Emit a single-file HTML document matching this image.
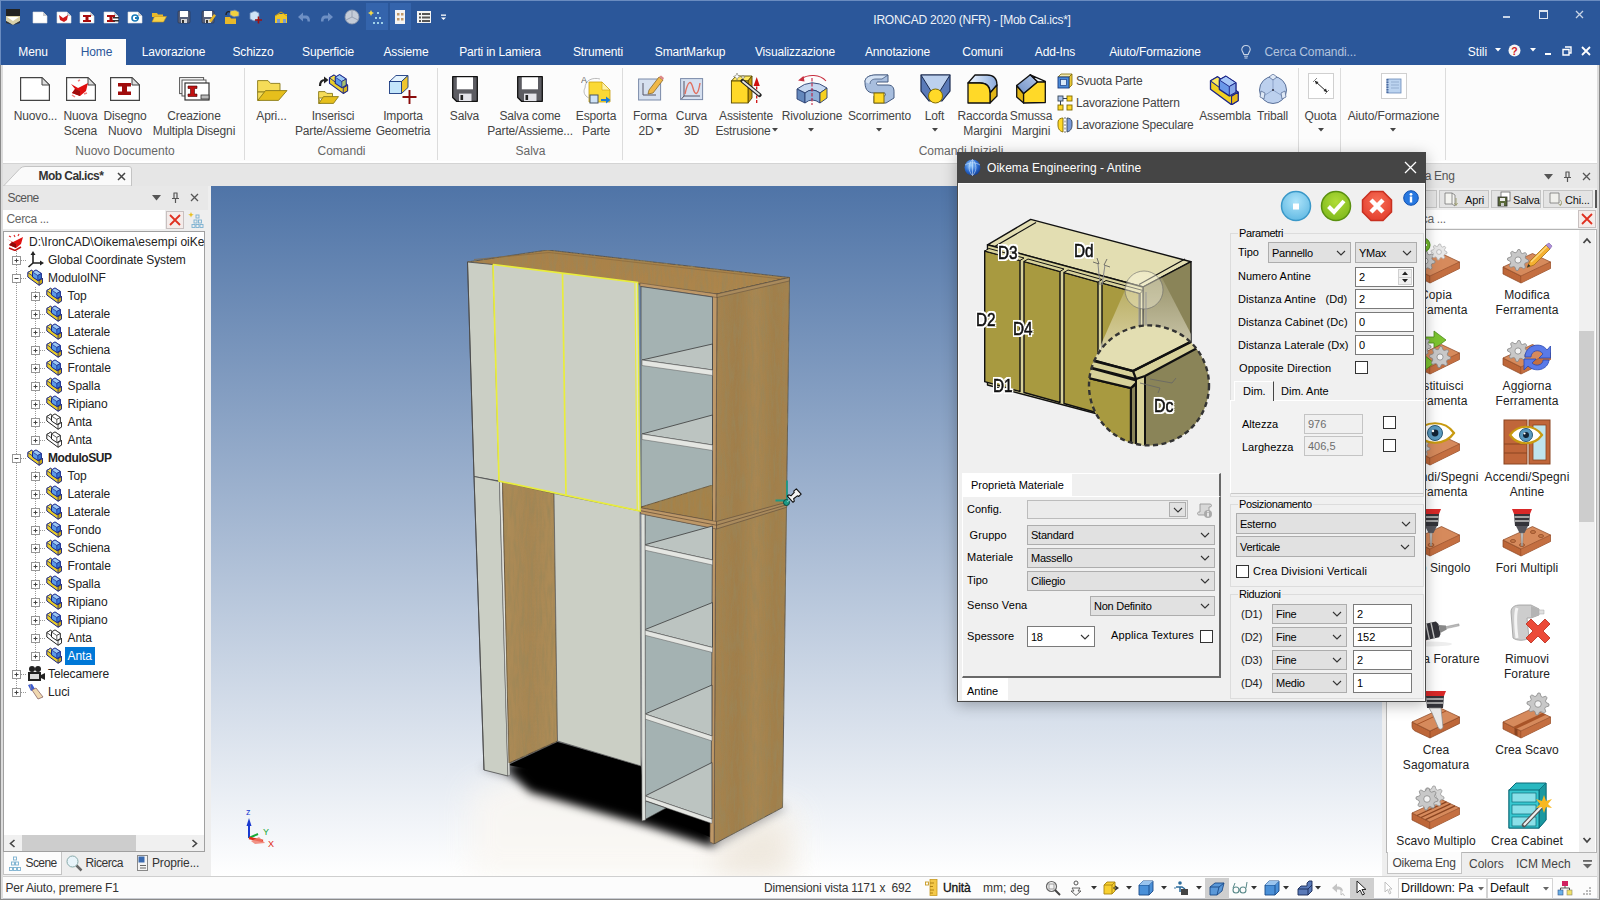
<!DOCTYPE html>
<html lang="it"><head><meta charset="utf-8"><title>IRONCAD 2020 (NFR) - [Mob Cal.ics*]</title>
<style>
html,body{margin:0;padding:0}
body{width:1600px;height:900px;overflow:hidden;position:relative;background:#f0f0f0;font-family:"Liberation Sans",sans-serif;font-size:12px;color:#222}
div,span.t,span.d,svg{position:absolute;box-sizing:border-box}
span.t{white-space:nowrap;line-height:16px;font-size:12px}
span.d{white-space:nowrap;line-height:14px;font-size:11px;color:#000}
span.c{transform:translateX(-50%)}
.w{color:#fff}
</style></head>
<body>
<div style="left:0px;top:0px;width:1600px;height:65px;background:#2b579a"></div><div style="left:0px;top:0px;width:1600px;height:1px;background:#6a8cc0"></div><div style="left:0px;top:0px;width:1px;height:65px;background:#6a8cc0"></div><svg style="left:5px;top:9px;" width="16" height="16" viewBox="0 0 16 16"><rect x="1" y="0" width="14" height="7" fill="#222"/><path d="M1 7 L15 7 L15 12 L8 16 L1 12Z" fill="#d8d0a8"/><path d="M2 8 L14 8 L8 12Z" fill="#fff"/><path d="M1 12 L8 16 L15 12 L15 14 L8 16 L1 14Z" fill="#333"/></svg><svg style="left:32px;top:9px;" width="16" height="16" viewBox="0 0 16 16"><path d="M1 3 L11 3 L15 7 L15 14 L1 14Z" fill="#fff" stroke="#ddd" stroke-width=".6"/><path d="M11 3 L11 7 L15 7Z" fill="#ccc"/></svg><svg style="left:56px;top:9px;" width="16" height="16" viewBox="0 0 16 16"><path d="M1 3 L11 3 L15 7 L15 14 L1 14Z" fill="#fff" stroke="#ddd" stroke-width=".6"/><path d="M11 3 L11 7 L15 7Z" fill="#ccc"/><path d="M3 6 L7 9 L12 6 L11 11 L8 13 L4 11Z" fill="#d01818"/></svg><svg style="left:79px;top:9px;" width="16" height="16" viewBox="0 0 16 16"><path d="M1 3 L11 3 L15 7 L15 14 L1 14Z" fill="#fff" stroke="#ddd" stroke-width=".6"/><path d="M11 3 L11 7 L15 7Z" fill="#ccc"/><path d="M4 6 H12 V8 H9.5 V11 H12 V13 H4 V11 H6.5 V8 H4Z" fill="#a80c0c"/></svg><svg style="left:103px;top:9px;" width="16" height="16" viewBox="0 0 16 16"><path d="M1 3 L11 3 L15 7 L15 14 L1 14Z" fill="#fff" stroke="#ddd" stroke-width=".6"/><path d="M11 3 L11 7 L15 7Z" fill="#ccc"/><path d="M4 6 H12 V8 H9.5 V11 H12 V13 H4 V11 H6.5 V8 H4Z" fill="#a80c0c"/><rect x="10" y="8" width="6" height="1.5" fill="#333"/><rect x="10" y="11" width="6" height="1.5" fill="#333"/></svg><svg style="left:127px;top:9px;" width="16" height="16" viewBox="0 0 16 16"><path d="M1 3 L11 3 L15 7 L15 14 L1 14Z" fill="#fff" stroke="#ddd" stroke-width=".6"/><path d="M11 3 L11 7 L15 7Z" fill="#ccc"/><circle cx="8" cy="9" r="3" fill="none" stroke="#1a7ab8" stroke-width="1.6"/><rect x="8" y="8" width="4" height="2" fill="#1a7ab8"/></svg><svg style="left:151px;top:9px;" width="16" height="16" viewBox="0 0 16 16"><path d="M1 4 H6 L7 5.5 H12 V8 H1Z" fill="#e8b82a"/><path d="M1 13 L3.5 7.5 H15.5 L12.5 13Z" fill="#f6d24a" stroke="#c8961a" stroke-width=".6"/></svg><svg style="left:176px;top:9px;" width="16" height="16" viewBox="0 0 16 16"><rect x="2" y="2" width="12" height="12" rx="1" fill="#56607a" stroke="#2a3048" stroke-width=".6"/><rect x="4" y="2" width="8" height="6" fill="#fff"/><rect x="5" y="10" width="6" height="4" fill="#d8d8d8"/><rect x="6" y="11" width="2" height="3" fill="#333"/></svg><svg style="left:200px;top:9px;" width="16" height="16" viewBox="0 0 16 16"><rect x="2" y="2" width="12" height="12" rx="1" fill="#56607a" stroke="#2a3048" stroke-width=".6"/><rect x="4" y="2" width="8" height="6" fill="#fff"/><rect x="5" y="10" width="6" height="4" fill="#d8d8d8"/><rect x="6" y="11" width="2" height="3" fill="#333"/><path d="M9 12 L14 5 L16 6.5 L11 13.5Z" fill="#e8b82a"/></svg><svg style="left:224px;top:9px;" width="16" height="16" viewBox="0 0 16 16"><path d="M1 8 H6 L7 9.5 H12 V15 H1Z" fill="#e8b82a"/><path d="M6 2 L11 1 L15 3 L15 7 L10 8 L6 6Z" fill="#f0d040" stroke="#5a7ab8" stroke-width=".8"/><path d="M2 6 C2 3 4 2 6 3" fill="none" stroke="#222" stroke-width="1.4"/></svg><svg style="left:247px;top:9px;" width="16" height="16" viewBox="0 0 16 16"><path d="M3 4 L8 2 L12 4 V10 L7 12 L3 10Z" fill="#cfe4f6" stroke="#6a8ab8" stroke-width=".8"/><path d="M8 11 H15 M11.5 7.5 V14.5" stroke="#a01010" stroke-width="1.6"/></svg><svg style="left:273px;top:9px;" width="16" height="16" viewBox="0 0 16 16"><path d="M2 7 L6 5 H14 V14 H2Z" fill="#f0c828"/><rect x="4" y="10" width="3" height="4" fill="#7a9ad0"/><rect x="10" y="10" width="3" height="4" fill="#7a9ad0"/><path d="M2 7 L8 3 L14 7" fill="none" stroke="#d0a010" stroke-width="1"/></svg><svg style="left:296px;top:9px;" width="16" height="16" viewBox="0 0 16 16"><path d="M2 8 L7 3.5 V6.5 H10 C13 6.5 14 9 14 12.5 H11.5 C11.5 10.5 11 9.5 9.5 9.5 H7 V12.5Z" fill="#6d8fc4"/></svg><svg style="left:319px;top:9px;" width="16" height="16" viewBox="0 0 16 16"><path d="M14 8 L9 3.5 V6.5 H6 C3 6.5 2 9 2 12.5 H4.500 C4.5 10.5 5 9.5 6.5 9.5 H9 V12.5Z" fill="#6d8fc4"/></svg><svg style="left:344px;top:9px;" width="16" height="16" viewBox="0 0 16 16"><circle cx="8" cy="8" r="7" fill="#c4ccd8" stroke="#8a96aa" stroke-width=".8"/><path d="M8 1 V8 L2 11 M8 8 L14 11" stroke="#98a2b4" stroke-width="1" fill="none"/></svg><div style="left:366px;top:3px;width:22px;height:27px;background:#3464ac"></div><div style="left:390px;top:3px;width:21px;height:27px;background:#3464ac"></div><svg style="left:368px;top:9px;" width="16" height="16" viewBox="0 0 16 16"><path d="M3 1 L4 3 L6 4 L4 5 L3 7 L2 5 L0 4 L2 3Z" fill="#f2d84a"/><g fill="#9fd0e8"><rect x="9" y="3" width="2" height="2"/><rect x="7" y="8" width="2" height="2"/><rect x="11" y="8" width="2" height="2"/><rect x="5" y="13" width="2" height="2"/><rect x="9" y="13" width="2" height="2"/><rect x="13" y="13" width="2" height="2"/></g></svg><svg style="left:392px;top:9px;" width="16" height="16" viewBox="0 0 16 16"><rect x="3" y="1" width="10" height="14" fill="#f4f4f4"/><rect x="5" y="4" width="2.5" height="2.5" fill="#c09868"/><rect x="9" y="4" width="2.5" height="2.5" fill="#c09868"/><rect x="5" y="9" width="2.5" height="2.5" fill="#c09868"/><rect x="9" y="9" width="2.5" height="2.5" fill="#c09868"/></svg><svg style="left:416px;top:9px;" width="16" height="16" viewBox="0 0 16 16"><rect x="1" y="2" width="14" height="12" fill="#f4f4f4"/><rect x="3" y="4" width="2" height="2" fill="#555"/><rect x="6" y="4" width="8" height="2" fill="#555"/><rect x="3" y="7.5" width="2" height="2" fill="#555"/><rect x="6" y="7.500" width="8" height="2" fill="#555"/><rect x="3" y="11" width="2" height="2" fill="#555"/><rect x="6" y="11" width="8" height="2" fill="#555"/></svg><svg style="left:435px;top:9px;" width="16" height="16" viewBox="0 0 16 16"><rect x="6" y="5.500" width="5" height="1.300" fill="#fff"/><path d="M6 8.500 H11 L8.500 11Z" fill="#fff"/></svg><span class="t c" style="left:972px;top:11.5px;color:#eef2f8;letter-spacing:-.25px">IRONCAD 2020 (NFR) - [Mob Cal.ics*]</span><div style="left:1503px;top:16px;width:7px;height:2px;background:#c8d4e6"></div><div style="left:1539px;top:10px;width:9px;height:9px;border:1px solid #dde5f0;border-top-width:2px"></div><svg style="left:1575px;top:10px;" width="9" height="9" viewBox="0 0 9 9"><path d="M1 1 L8 8 M8 1 L1 8" stroke="#c8d4e6" stroke-width="1.3"/></svg><div style="left:66px;top:39px;width:60px;height:27px;background:#fcfcfc"></div><span class="t c" style="left:33px;top:44px;color:#fff;letter-spacing:-.15px">Menu</span><span class="t c" style="left:96.5px;top:44px;color:#2b579a;letter-spacing:-.15px">Home</span><span class="t c" style="left:173.5px;top:44px;color:#fff;letter-spacing:-.15px">Lavorazione</span><span class="t c" style="left:253px;top:44px;color:#fff;letter-spacing:-.15px">Schizzo</span><span class="t c" style="left:328px;top:44px;color:#fff;letter-spacing:-.15px">Superficie</span><span class="t c" style="left:406px;top:44px;color:#fff;letter-spacing:-.15px">Assieme</span><span class="t c" style="left:500px;top:44px;color:#fff;letter-spacing:-.15px">Parti in Lamiera</span><span class="t c" style="left:598px;top:44px;color:#fff;letter-spacing:-.15px">Strumenti</span><span class="t c" style="left:690px;top:44px;color:#fff;letter-spacing:-.15px">SmartMarkup</span><span class="t c" style="left:795px;top:44px;color:#fff;letter-spacing:-.15px">Visualizzazione</span><span class="t c" style="left:897.5px;top:44px;color:#fff;letter-spacing:-.15px">Annotazione</span><span class="t c" style="left:982.5px;top:44px;color:#fff;letter-spacing:-.15px">Comuni</span><span class="t c" style="left:1055px;top:44px;color:#fff;letter-spacing:-.15px">Add-Ins</span><span class="t c" style="left:1155px;top:44px;color:#fff;letter-spacing:-.15px">Aiuto/Formazione</span><svg style="left:1240px;top:44px;" width="12" height="16" viewBox="0 0 12 16"><path d="M6 1.500 C3 1.500 1.800 3.600 1.800 5.500 C1.800 7.500 3.500 8.500 3.800 10.500 H8.200 C8.500 8.500 10.200 7.500 10.200 5.500 C10.200 3.600 9 1.500 6 1.500Z" fill="none" stroke="#c8d4e6" stroke-width="1.1"/><path d="M4 12.200 H8 M4.500 14 H7.500" stroke="#c8d4e6" stroke-width="1"/></svg><span class="t" style="left:1264.5px;top:44px;color:#b4c4de;letter-spacing:-.1px">Cerca Comandi...</span><span class="t c" style="left:1477.5px;top:44px;color:#fff">Stili</span><svg style="left:1495px;top:48px;" width="6" height="4" viewBox="0 0 6 4"><path d="M0 0 H6 L3 3.500Z" fill="#fff"/></svg><svg style="left:1508px;top:44px;" width="13" height="13" viewBox="0 0 13 13"><circle cx="6.500" cy="6.500" r="6" fill="#f6f6f6"/><text x="6.500" y="10.500" font-size="10.500" font-weight="bold" fill="#d02020" text-anchor="middle" font-family="Liberation Sans,sans-serif">?</text></svg><svg style="left:1530px;top:48px;" width="6" height="4" viewBox="0 0 6 4"><path d="M0 0 H6 L3 3.500Z" fill="#fff"/></svg><div style="left:1545px;top:53px;width:6px;height:2px;background:#fff"></div><svg style="left:1562px;top:46px;" width="10" height="10" viewBox="0 0 10 10"><path d="M3 1 H9 V7 H7 M1 3.500 H7 V9 H1Z" fill="none" stroke="#fff" stroke-width="1.400"/></svg><svg style="left:1581px;top:46px;" width="10" height="10" viewBox="0 0 10 10"><path d="M1 1 L9 9 M9 1 L1 9" stroke="#fff" stroke-width="1.800"/></svg>
<div style="left:0px;top:65px;width:1600px;height:99px;background:#fcfcfc"></div><div style="left:0px;top:65px;width:3px;height:99px;background:#e4e7ec"></div><div style="left:1597px;top:65px;width:3px;height:99px;background:#e4e7ec"></div><div style="left:0px;top:161px;width:1600px;height:2px;background:#ffffff"></div><div style="left:0px;top:163px;width:1600px;height:1px;background:#d4d4d4"></div><svg style="left:20px;top:77px;" width="30" height="24" viewBox="0 0 30 24"><path d="M.6 .6 H22 L29.400 8 V23.400 H.6Z" fill="#fff" stroke="#444" stroke-width="1.200"/><path d="M22 .6 V8 H29.400Z" fill="#ddd" stroke="#444" stroke-width="1"/></svg><svg style="left:66px;top:77px;" width="30" height="24" viewBox="0 0 30 24"><path d="M.6 .6 H22 L29.400 8 V23.400 H.6Z" fill="#fff" stroke="#444" stroke-width="1.200"/><path d="M22 .6 V8 H29.400Z" fill="#ddd" stroke="#444" stroke-width="1"/><path d="M5 7 L12 11 L22 6 L20 14 L14 19 L6 16 L9 12Z" fill="#e01010"/><path d="M9 12 L14 14 L14 19 L6 16Z" fill="#a00c0c"/><path d="M12 4 l2 -1 M6 18 l3 2 M18 17 l3 -1" stroke="#f08080" stroke-width="1.500"/></svg><svg style="left:110px;top:77px;" width="30" height="24" viewBox="0 0 30 24"><path d="M.6 .6 H22 L29.400 8 V23.400 H.6Z" fill="#fff" stroke="#444" stroke-width="1.200"/><path d="M22 .6 V8 H29.400Z" fill="#ddd" stroke="#444" stroke-width="1"/><path d="M8 6 H21 V9.500 H17 V14.500 H21 V18 H8 V14.500 H12 V9.500 H8Z" fill="#a00c0c"/></svg><svg style="left:179px;top:77px;" width="31" height="24" viewBox="0 0 31 24"><rect x=".6" y=".6" width="24" height="16" fill="#fff" stroke="#555" stroke-width="1"/><rect x="3" y="3" width="24" height="16" fill="#fff" stroke="#555" stroke-width="1"/><rect x="6" y="6" width="24" height="17" fill="#fff" stroke="#333" stroke-width="1.200"/><path d="M9 9 H18 V11.500 H15.500 V17 H18 V19.500 H9 V17 H11.500 V11.500 H9Z" fill="#c01010" stroke="#400" stroke-width=".6"/><rect x="22" y="18" width="8" height="4" fill="#bbb" stroke="#333" stroke-width=".8"/></svg><span class="t c" style="left:35.5px;top:108px;color:#444;letter-spacing:-.15px">Nuovo...</span><span class="t c" style="left:80.5px;top:108px;color:#444;letter-spacing:-.15px">Nuova</span><span class="t c" style="left:80.5px;top:123px;color:#444;letter-spacing:-.15px">Scena</span><span class="t c" style="left:125px;top:108px;color:#444;letter-spacing:-.15px">Disegno</span><span class="t c" style="left:125px;top:123px;color:#444;letter-spacing:-.15px">Nuovo</span><span class="t c" style="left:194px;top:108px;color:#444;letter-spacing:-.15px">Creazione</span><span class="t c" style="left:194px;top:123px;color:#444;letter-spacing:-.15px">Multipla Disegni</span><span class="t c" style="left:125px;top:143px;color:#666">Nuovo Documento</span><div style="left:244px;top:68px;width:1px;height:92px;background:#dcdcdc"></div><svg style="left:257px;top:79.5px;" width="31" height="21" viewBox="0 0 31 21"><path d="M.6 .6 H11 L13.500 3.400 H23 V12 H.6Z" fill="#f6dc58" stroke="#8a7a1a" stroke-width=".9" stroke-linejoin="round"/><path d="M.6 12 V20.400 H3 L9 12Z" fill="#f6dc58" stroke="#8a7a1a" stroke-width=".9"/><path d="M.8 20.400 L8.500 10.600 H30 L21.500 20.400Z" fill="#e6bf1c" stroke="#8a7a1a" stroke-width=".9" stroke-linejoin="round"/></svg><svg style="left:317px;top:73px;" width="33" height="32" viewBox="0 0 33 32"><path d="M1.600 18.600 H8 L9.800 20.400 H15.500 V25 H1.600Z" fill="#f6dc58" stroke="#8a7a1a" stroke-width=".9" stroke-linejoin="round"/><path d="M1.600 25 V30.400 H4Z" fill="#f6dc58" stroke="#8a7a1a" stroke-width=".8"/><path d="M1.800 30.400 L6.500 23.600 H21.500 L16.500 30.400Z" fill="#e6bf1c" stroke="#8a7a1a" stroke-width=".9" stroke-linejoin="round"/><path d="M3 13 C3 8.500 5 7 8 7" fill="none" stroke="#222" stroke-width="2.200"/><path d="M7 3.500 L11.500 7 L7 10.500Z" fill="#222"/><g transform="translate(11.500,.5) scale(1.230)"><path d="M.8 3.500 L4.500 1.300 L15.500 9.500 V14 L12 16.200 L.8 8Z" fill="#e8cc28" stroke="#1a2488" stroke-width=".9" stroke-linejoin="round"/><path d="M.8 3.500 L4.500 1.300 L15.500 9.500 L12 11.700Z" fill="#f4e04a" stroke="#1a2488" stroke-width=".7" stroke-linejoin="round"/><path d="M12 11.700 V16.200 L15.500 14 V9.500Z" fill="#d8b41c" stroke="#1a2488" stroke-width=".7" stroke-linejoin="round"/><path d="M5.500 3 L9 1 L14.300 4.500 V9.500 L10.800 11.500 L5.500 8Z" fill="#5a9ae8" stroke="#1a2488" stroke-width=".9" stroke-linejoin="round"/><path d="M5.500 3 L9 1 L14.300 4.500 L10.800 6.500Z" fill="#9cc8f4" stroke="#1a2488" stroke-width=".6" stroke-linejoin="round"/><path d="M10.800 6.500 V11.500 L14.300 9.500 V4.500Z" fill="#a8c070" stroke="#1a2488" stroke-width=".6" stroke-linejoin="round"/></g></svg><svg style="left:388px;top:74px;" width="30" height="31" viewBox="0 0 30 31"><path d="M1.500 7.500 L8 1.500 H20 L13.500 7.500Z" fill="#e6f4fd" stroke="#1a3a80" stroke-width=".9" stroke-linejoin="round"/><path d="M13.500 7.500 L20 1.500 V13.500 L13.500 19.500Z" fill="#efc62e" stroke="#1a3a80" stroke-width=".9" stroke-linejoin="round"/><rect x="1.500" y="7.500" width="12" height="12" fill="#c4e6fb" stroke="#1a3a80" stroke-width=".9"/><path d="M14.500 23 H28.500 M21.500 16 V30" stroke="#8a0c0c" stroke-width="1.900"/></svg><span class="t c" style="left:271.5px;top:108px;color:#444;letter-spacing:-.15px">Apri...</span><span class="t c" style="left:333px;top:108px;color:#444;letter-spacing:-.15px">Inserisci</span><span class="t c" style="left:333px;top:123px;color:#444;letter-spacing:-.15px">Parte/Assieme</span><span class="t c" style="left:403px;top:108px;color:#444;letter-spacing:-.15px">Importa</span><span class="t c" style="left:403px;top:123px;color:#444;letter-spacing:-.15px">Geometria</span><span class="t c" style="left:341.5px;top:143px;color:#666">Comandi</span><div style="left:437px;top:68px;width:1px;height:92px;background:#dcdcdc"></div><svg style="left:452px;top:76px;" width="26" height="26" viewBox="0 0 26 26"><path d="M.7 .7 H25.300 V25.300 H4.500 L.7 21.500Z" fill="#5c5c62" stroke="#111" stroke-width="1.300" stroke-linejoin="round"/><rect x="4.800" y="1.300" width="16.200" height="12" fill="#fff"/><rect x="7" y="17.600" width="12.500" height="7.500" fill="#e4e4ea"/><rect x="8.500" y="19" width="2.600" height="5" fill="#222"/></svg><svg style="left:517px;top:76px;" width="26" height="26" viewBox="0 0 26 26"><path d="M.7 .7 H25.300 V25.300 H4.500 L.7 21.500Z" fill="#5c5c62" stroke="#111" stroke-width="1.300" stroke-linejoin="round"/><rect x="4.800" y="1.300" width="16.200" height="12" fill="#fff"/><rect x="7" y="17.600" width="12.500" height="7.500" fill="#e4e4ea"/><rect x="8.500" y="19" width="2.600" height="5" fill="#222"/></svg><svg style="left:581px;top:74px;" width="31" height="30" viewBox="0 0 31 30"><path d="M8 8 H21 L29 16 V28 H8Z" fill="#fbd935" stroke="#c8a010" stroke-width=".8"/><path d="M21 8 V16 H29Z" fill="#fff3a8" stroke="#c8a010" stroke-width=".6"/><rect x="9" y="21" width="8" height="8" fill="#cfe2f6" stroke="#456" stroke-width="1"/><path d="M20 25 H25 V22.500 L29.500 26 L25 29.500 V27 H20Z" fill="#1a7ad8"/><path d="M4 14 C4 6 12 3 19 5 M8 24 C3 22 2 17 4 14" fill="none" stroke="#aaa" stroke-width=".8"/><text x="0" y="9" font-size="9" fill="#666" font-family="Liberation Sans,sans-serif">A</text></svg><span class="t c" style="left:464.5px;top:108px;color:#444;letter-spacing:-.15px">Salva</span><span class="t c" style="left:530px;top:108px;color:#444;letter-spacing:-.15px">Salva come</span><span class="t c" style="left:530px;top:123px;color:#444;letter-spacing:-.15px">Parte/Assieme...</span><span class="t c" style="left:596px;top:108px;color:#444;letter-spacing:-.15px">Esporta</span><span class="t c" style="left:596px;top:123px;color:#444;letter-spacing:-.15px">Parte</span><span class="t c" style="left:530.5px;top:143px;color:#666">Salva</span><div style="left:622px;top:68px;width:1px;height:92px;background:#dcdcdc"></div><svg style="left:638px;top:74px;" width="26" height="28" viewBox="0 0 26 28"><rect x=".6" y="5" width="22" height="21" fill="#d6e0f0" stroke="#7a8aa8" stroke-width="1"/><path d="M5 9 V21 H18" fill="none" stroke="#556" stroke-width="1"/><path d="M11 16 L21 3 L25 6 L15 19 L10 20Z" fill="#f0b848" stroke="#8a6a2a" stroke-width=".8"/><path d="M21 3 L25 6 L26 4 L23 1.500Z" fill="#d88"/></svg><svg style="left:680px;top:78px;" width="24" height="23" viewBox="0 0 24 23"><rect x=".6" y=".6" width="22" height="21" fill="#d6e0f0" stroke="#7a8aa8" stroke-width="1"/><path d="M4 3 V18 H20 M4 18 L1.500 21" fill="none" stroke="#556" stroke-width="1"/><path d="M5 16 C8 2 11 2 13 10 C15 18 18 18 20 5" fill="none" stroke="#e07060" stroke-width="1.400"/></svg><svg style="left:730px;top:73px;" width="32" height="31" viewBox="0 0 32 31"><path d="M1.400 8 L6 3 H22 L18 8Z" fill="#ffe860" stroke="#5a4a00" stroke-width=".9" stroke-linejoin="round"/><path d="M18 8 L22 3 V25 L18 30Z" fill="#c89a10" stroke="#5a4a00" stroke-width=".9" stroke-linejoin="round"/><rect x="1.400" y="8" width="16.600" height="22" fill="#ffd928" stroke="#5a4a00" stroke-width=".9"/><path d="M26.700 30 V12" stroke="#d01010" stroke-width="1.300" stroke-dasharray="3 1.500"/><path d="M23.600 13 L26.700 4 L29.800 13Z" fill="#d01010"/><path d="M12.500 8 L29.500 22" stroke="#222" stroke-width="4.200" stroke-linecap="round"/><path d="M13 8.500 L29 21.500" stroke="#e4e4e4" stroke-width="1.800" stroke-linecap="round"/><path d="M7 0 l1 2.500 l2.500 1 l-2.500 1 l-1 2.500 l-1 -2.500 l-2.500 -1 l2.500 -1Z M13 2 l.6 1.500 l1.500 .6 l-1.500 .6 l-.6 1.500 l-.6 -1.500 l-1.500 -.6 l1.500 -.6Z" fill="#fff" stroke="#665" stroke-width=".5"/></svg><span class="t c" style="left:650px;top:108px;color:#444;letter-spacing:-.15px">Forma</span><span class="t c" style="left:646px;top:123px;color:#444;letter-spacing:-.15px">2D</span><svg style="left:655.5px;top:127.5px;" width="6" height="4" viewBox="0 0 6 4"><path d="M0 0 H6 L3 3.500Z" fill="#444"/></svg><span class="t c" style="left:691.5px;top:108px;color:#444;letter-spacing:-.15px">Curva</span><span class="t c" style="left:691.5px;top:123px;color:#444;letter-spacing:-.15px">3D</span><span class="t c" style="left:746px;top:108px;color:#444;letter-spacing:-.15px">Assistente</span><span class="t c" style="left:743px;top:123px;color:#444;letter-spacing:-.15px">Estrusione</span><svg style="left:771.5px;top:127.5px;" width="6" height="4" viewBox="0 0 6 4"><path d="M0 0 H6 L3 3.500Z" fill="#444"/></svg><svg style="left:786px;top:72px;" width="43" height="33" viewBox="0 0 43 33"><path d="M11 17 Q26 5 41 16 L34 21 Q26 15 19 21Z" fill="#c6d8f0" stroke="#2a4070" stroke-width=".9" stroke-linejoin="round"/><path d="M11 17 L19 21 V31 L11 27Z" fill="#6488bc" stroke="#2a4070" stroke-width=".9" stroke-linejoin="round"/><path d="M19 21 Q26 15 34 21 V31 Q26 25 19 31Z" fill="#8eaed8" stroke="#2a4070" stroke-width=".9" stroke-linejoin="round"/><path d="M34 21 L41 16 V26 L34 31Z" fill="#f6d020" stroke="#2a4070" stroke-width=".9" stroke-linejoin="round"/><path d="M26 6 V33" stroke="#c01030" stroke-width="1" stroke-dasharray="3.500 1.500"/><path d="M40 9 C34 2 22 2 15 7" fill="none" stroke="#c83040" stroke-width="1.100"/><path d="M12 8.500 L17.500 4 L18.500 9.500Z" fill="#c83040"/></svg><span class="t c" style="left:812px;top:108px;color:#444;letter-spacing:-.15px">Rivoluzione</span><svg style="left:808px;top:127.5px;" width="6" height="4" viewBox="0 0 6 4"><path d="M0 0 H6 L3 3.500Z" fill="#444"/></svg><svg style="left:864px;top:74px;" width="31" height="30" viewBox="0 0 31 30"><path d="M1 8 C1 3 6 1 12 1 H24 V8 H14 C12 8 12 11 14 11 H24 C30 11 30 16 30 18 V24 L22 29 H10 V22 H20 C22 22 22 19 20 19 H10 C2 19 1 13 1 8Z" fill="#a8bede" stroke="#445a80" stroke-width="1"/><path d="M1 8 C1 3 6 1 12 1 H24 L18 5 H12 C8 5 6 7 6 10" fill="#d4e2f4" stroke="#445a80" stroke-width=".8"/><rect x="10" y="19" width="10" height="10" fill="#ffd928" stroke="#806a00" stroke-width="1"/></svg><span class="t c" style="left:879.5px;top:108px;color:#444;letter-spacing:-.15px">Scorrimento</span><svg style="left:876px;top:127.5px;" width="6" height="4" viewBox="0 0 6 4"><path d="M0 0 H6 L3 3.500Z" fill="#444"/></svg><svg style="left:920px;top:74px;" width="31" height="30" viewBox="0 0 31 30"><path d="M1 1 H30 V17 L22 27 H9 L1 17Z" fill="#5a7ab8" stroke="#1a2a50" stroke-width="1.200"/><path d="M1 1 H30 L20 17 H11Z" fill="#bcd0ee" stroke="#1a2a50" stroke-width="1"/><circle cx="15.500" cy="22" r="7" fill="#ffd928" stroke="#806a00" stroke-width="1"/></svg><span class="t c" style="left:934.5px;top:108px;color:#444;letter-spacing:-.15px">Loft</span><svg style="left:931.5px;top:127.5px;" width="6" height="4" viewBox="0 0 6 4"><path d="M0 0 H6 L3 3.500Z" fill="#444"/></svg><svg style="left:967px;top:74px;" width="31" height="30" viewBox="0 0 31 30"><defs><linearGradient id="rb" x1="0" x2="1" y1="0" y2="0"><stop offset="0" stop-color="#f4f8fd"/><stop offset=".6" stop-color="#b4cbec"/><stop offset="1" stop-color="#8aa8d8"/></linearGradient></defs><path d="M1 9 L8 1 H20 Q30 1 30 11 L23 19 Q23 9 13 9Z" fill="url(#rb)" stroke="#111" stroke-width="1.300" stroke-linejoin="round"/><path d="M23 19 L30 11 V22 L23 29Z" fill="#e2b616" stroke="#111" stroke-width="1.300" stroke-linejoin="round"/><path d="M1 9 H13 Q23 9 23 19 V29 H1Z" fill="#ffd928" stroke="#111" stroke-width="1.300" stroke-linejoin="round"/></svg><span class="t c" style="left:982.5px;top:108px;color:#444;letter-spacing:-.15px">Raccorda</span><span class="t c" style="left:982.5px;top:123px;color:#444;letter-spacing:-.15px">Margini</span><svg style="left:1016px;top:74px;" width="31" height="30" viewBox="0 0 31 30"><defs><linearGradient id="sb" x1="0" x2="1" y1="1" y2="0"><stop offset="0" stop-color="#6f90c6"/><stop offset="1" stop-color="#b4c8e8"/></linearGradient></defs><path d="M.7 11.500 L7.600 19.500 V29 L.7 22.900Z" fill="#e2b616" stroke="#111" stroke-width="1.300" stroke-linejoin="round"/><path d="M7.600 19.500 L21.600 7.800 H29.300 V28.500 L7.600 29Z" fill="#ffd928" stroke="#111" stroke-width="1.300" stroke-linejoin="round"/><path d="M.7 11.500 L14.300 .8 L21.600 7.800 L7.600 19.500Z" fill="url(#sb)" stroke="#111" stroke-width="1.300" stroke-linejoin="round"/><path d="M14.300 .8 L29.300 7.300 V7.800 H21.600Z" fill="#f6f9fd" stroke="#111" stroke-width="1.300" stroke-linejoin="round"/></svg><span class="t c" style="left:1031px;top:108px;color:#444;letter-spacing:-.15px">Smussa</span><span class="t c" style="left:1031px;top:123px;color:#444;letter-spacing:-.15px">Margini</span><svg style="left:1057px;top:73px;" width="16" height="16" viewBox="0 0 16 16"><path d="M1 4 L4 1 H15 L12 4Z" fill="#f0e8b0" stroke="#806a00" stroke-width=".8" stroke-linejoin="round"/><path d="M12 4 L15 1 V12 L12 15Z" fill="#e8c838" stroke="#806a00" stroke-width=".8" stroke-linejoin="round"/><rect x="1" y="4" width="11" height="11" fill="#4a8ad8" stroke="#1a3a80" stroke-width=".9"/><rect x="3.500" y="6.500" width="6" height="6" fill="#d8e8f8" stroke="#1a3a80" stroke-width=".7"/></svg><svg style="left:1057px;top:95px;" width="16" height="16" viewBox="0 0 16 16"><rect x="1" y="1" width="5" height="5" fill="#a8c0e8" stroke="#345" stroke-width=".9"/><rect x="10" y="1" width="5" height="5" fill="#ffd928" stroke="#806a00" stroke-width=".9"/><rect x="1" y="10" width="5" height="5" fill="#ffd928" stroke="#806a00" stroke-width=".9"/><rect x="10" y="10" width="5" height="5" fill="#ffd928" stroke="#806a00" stroke-width=".9"/><path d="M6 3.500 H10 M3.500 6 V10" stroke="#345" stroke-width="1"/></svg><svg style="left:1057px;top:117px;" width="16" height="16" viewBox="0 0 16 16"><path d="M1 5 C1 2 4 1 6 1 V15 C2 14 1 11 1 8Z" fill="#ffd928" stroke="#806a00" stroke-width=".9"/><path d="M15 5 C15 2 12 1 10 1 V15 C14 14 15 11 15 8Z" fill="#7a9ad8" stroke="#345" stroke-width=".9"/><path d="M8 0 V16" stroke="#555" stroke-width=".8" stroke-dasharray="2 1.500"/></svg><span class="t" style="left:1076px;top:73px;color:#444;letter-spacing:-.25px">Svuota Parte</span><span class="t" style="left:1076px;top:95px;color:#444;letter-spacing:-.2px">Lavorazione Pattern</span><span class="t" style="left:1076px;top:117px;color:#444;letter-spacing:-.25px">Lavorazione Speculare</span><svg style="left:1209px;top:74px;" width="31" height="31" viewBox="0 0 31 31"><g transform="translate(0,.3) scale(1.880)"><path d="M.8 3.500 L4.500 1.300 L15.500 9.500 V14 L12 16.200 L.8 8Z" fill="#f0d020" stroke="#1a2488" stroke-width=".7" stroke-linejoin="round"/><path d="M.8 3.500 L4.500 1.300 L15.500 9.500 L12 11.700Z" fill="#fae860" stroke="#1a2488" stroke-width=".55" stroke-linejoin="round"/><path d="M12 11.700 V16.200 L15.500 14 V9.500Z" fill="#e8b818" stroke="#1a2488" stroke-width=".55" stroke-linejoin="round"/><path d="M5.500 3 L9 1 L14.300 4.500 V9.500 L10.800 11.500 L5.500 8Z" fill="#6a98e8" stroke="#1a2488" stroke-width=".7" stroke-linejoin="round"/><path d="M5.500 3 L9 1 L14.300 4.500 L10.800 6.500Z" fill="#a8c8f8" stroke="#1a2488" stroke-width=".5" stroke-linejoin="round"/><path d="M10.800 6.500 V11.500 L14.300 9.500 V4.500Z" fill="#88a8e8" stroke="#1a2488" stroke-width=".5" stroke-linejoin="round"/></g></svg><span class="t c" style="left:1225px;top:108px;color:#444;letter-spacing:-.15px">Assembla</span><svg style="left:1258px;top:74px;" width="30" height="30" viewBox="0 0 30 30"><circle cx="15" cy="16" r="13.500" fill="#bcd0ee" stroke="#5a7098" stroke-width="1"/><path d="M15 2 V16 L4 23 M15 16 L26 23" stroke="#8098c0" stroke-width=".8" fill="none"/><path d="M11 3 L15 0 L19 3 L15 6Z M3 17 L7 19 L6 25 L2 23Z M27 17 L23 19 L24 25 L28 23Z" fill="#dfe9f6" stroke="#5a7098" stroke-width=".8"/><circle cx="15" cy="16" r="1" fill="#334"/></svg><span class="t c" style="left:1272.5px;top:108px;color:#444;letter-spacing:-.15px">Triball</span><span class="t c" style="left:961px;top:143px;color:#666">Comandi Iniziali</span><div style="left:1298px;top:68px;width:1px;height:92px;background:#dcdcdc"></div><svg style="left:1308px;top:73px;" width="26" height="26" viewBox="0 0 26 26"><rect x=".5" y=".5" width="25" height="25" fill="#fff" stroke="#d0d0d0"/><path d="M7 8 L19 19" stroke="#222" stroke-width="1"/><path d="M5 9 L9 5 M17 21 L21 17" stroke="#666" stroke-width=".8"/><path d="M7 8 L10.500 9 L8 11.500Z M19 19 L15.500 18 L18 15.500Z" fill="#222"/></svg><span class="t c" style="left:1320.5px;top:108px;color:#444;letter-spacing:-.15px">Quota</span><svg style="left:1317.5px;top:127.5px;" width="6" height="4" viewBox="0 0 6 4"><path d="M0 0 H6 L3 3.500Z" fill="#444"/></svg><div style="left:1340px;top:68px;width:1px;height:92px;background:#dcdcdc"></div><svg style="left:1381px;top:73px;" width="26" height="26" viewBox="0 0 26 26"><rect x=".5" y=".5" width="25" height="25" fill="#fff" stroke="#d0d0d0"/><rect x="6" y="6" width="14" height="14" fill="#bcd4f0" stroke="#6a8ab8" stroke-width=".8"/><path d="M6.500 6 V20" stroke="#4a6aa0" stroke-width="2" stroke-dasharray="1.500 1"/><path d="M10 9 H18 M10 12 H18 M10 15 H18" stroke="#8aa4c8" stroke-width=".8"/></svg><span class="t c" style="left:1393.5px;top:108px;color:#444;letter-spacing:-.15px">Aiuto/Formazione</span><svg style="left:1390px;top:127.5px;" width="6" height="4" viewBox="0 0 6 4"><path d="M0 0 H6 L3 3.500Z" fill="#444"/></svg><div style="left:1445px;top:68px;width:1px;height:92px;background:#dcdcdc"></div>
<div style="left:0px;top:164px;width:1386px;height:22px;background:#e6e6e6"></div><svg style="left:3px;top:166px;" width="130" height="20" viewBox="0 0 130 20"><path d="M.5 20 L17 2.500 Q19 .5 22 .5 H126 Q128.500 .5 128.500 3 V20Z" fill="#fafafa" stroke="#c4c4c4"/></svg><span class="t" style="left:38.5px;top:168px;font-weight:bold;color:#333;letter-spacing:-.55px">Mob Cal.ics*</span><svg style="left:117px;top:172px;" width="9" height="9" viewBox="0 0 9 9"><path d="M1 1 L8 8 M8 1 L1 8" stroke="#444" stroke-width="1.500"/></svg>
<div style="left:211px;top:186px;width:1171px;height:691px;background:linear-gradient(#4f74a7,#ffffff)"></div><svg style="left:211px;top:186px;" width="1171" height="691" viewBox="0 0 1171 691"><defs><linearGradient id="wood" x1="0" x2="1" y1="0" y2="0"><stop offset="0" stop-color="#a68450"/><stop offset=".3" stop-color="#a07e4b"/><stop offset=".55" stop-color="#a98752"/><stop offset=".8" stop-color="#a17f4b"/><stop offset="1" stop-color="#a5824e"/></linearGradient><linearGradient id="woodt" x1="0" x2="1" y1="0" y2="1"><stop offset="0" stop-color="#a88048"/><stop offset="1" stop-color="#ad864d"/></linearGradient><filter id="bl" x="-20%" y="-20%" width="140%" height="140%"><feGaussianBlur stdDeviation="5"/></filter><filter id="bl2" x="-30%" y="-30%" width="160%" height="160%"><feGaussianBlur stdDeviation="14"/></filter><filter id="wn" x="0" y="0" width="100%" height="100%"><feTurbulence type="fractalNoise" baseFrequency="0.35 0.045" numOctaves="3" seed="7" result="n"/><feColorMatrix in="n" type="matrix" values="0 0 0 0 .32  0 0 0 0 .24  0 0 0 0 .1  1.6 0 0 0 -.62" result="c"/><feComposite in="c" in2="SourceAlpha" operator="in" result="d"/><feMerge><feMergeNode in="SourceGraphic"/><feMergeNode in="d"/></feMerge></filter><pattern id="grain" width="7" height="60" patternUnits="userSpaceOnUse"><path d="M2 0 V60 M5 10 V45" stroke="#7a6236" stroke-width=".7" opacity=".3"/><path d="M3.500 0 V30" stroke="#b89c68" stroke-width=".6" opacity=".35"/></pattern><linearGradient id="wood2" x1="0" x2="1" y1="0" y2="0"><stop offset="0" stop-color="#ad8c58"/><stop offset=".5" stop-color="#a78652"/><stop offset="1" stop-color="#ae8d59"/></linearGradient></defs><polygon points="259,604 349,574 589,624 589,691 259,691" fill="#faf7f2" opacity=".8" filter="url(#bl2)"/><polygon points="505,664 573,626 579,691 505,691" fill="#e6dccc" opacity=".55" filter="url(#bl2)"/><polygon points="269,582 503,662 576,622 346,550" fill="#4a4a50" opacity=".42" filter="url(#bl)"/><polygon points="295,582 346,556 431,580 489,604 502,632 502,660 439,640 389,626 319,606" fill="#000" filter="url(#bl)"/><polygon points="297,579 346.5,556 430,580 431,635 455,622 501,635 501,652 429,620 349,589" fill="#000" /><polygon points="336.5,64 578.5,91.5 506,108 256.5,76" fill="url(#woodt)" stroke="#4a4a4a" stroke-width="0.8" filter="url(#wn)"/><polyline points="263,73.5 338,66.5 575,93.5" fill="none" stroke="#8a6a3e" stroke-width="0.7" /><polygon points="506,108 578.5,91.5 571.5,621.5 503,658" fill="url(#wood)" stroke="#4a4a4a" stroke-width="0.8" filter="url(#wn)"/><polygon points="501.5,108 506,108 503,658 499,656" fill="#be9868" stroke="#5a4a3a" stroke-width="0.6" /><polygon points="429,97 506,108 506,111.5 429,100.5" fill="#be9868" stroke="#5a4a3a" stroke-width="0.5" /><polygon points="506,108 578.5,91.5 578.3,95 506,111.5" fill="#a98a5c" stroke="#5a4a3a" stroke-width="0.5" /><polygon points="430,100.5 501.5,111 501.5,334 430,321" fill="#a4b2b2" stroke="#4a4a4a" stroke-width="0.8" /><polygon points="430,327.5 501.5,342 500,636 434,614 434,328" fill="#a4b2b2" stroke="#4a4a4a" stroke-width="0.8" /><polygon points="431,174 501.5,158 501.5,184" fill="#bcc4c1" stroke="#3a3a3a" stroke-width="0.8" /><polygon points="431,174 501.5,184 501.5,189.5 431,179.5" fill="#e4e6e2" stroke="#5a5a5a" stroke-width="0.5" /><polygon points="431,248 501.5,229 501.5,259" fill="#bcc4c1" stroke="#3a3a3a" stroke-width="0.8" /><polygon points="431,248 501.5,259 501.5,264.5 431,253.5" fill="#e4e6e2" stroke="#5a5a5a" stroke-width="0.5" /><polygon points="430,321 501.5,299 501.5,335 430,322" fill="#a6824a" stroke="#4a3a2a" stroke-width="0.7" filter="url(#wn)"/><polygon points="429.5,321.7 505.5,335.5 505.5,343 429.5,327.8" fill="#be9868" stroke="#5a4a3a" stroke-width="0.6" /><polyline points="429.5,324.7 505.5,339.2" fill="none" stroke="#6a5238" stroke-width="0.8" /><polygon points="505.5,335.5 576,316.2 575.8,321.2 505.5,343" fill="#a98a5c" stroke="#5a4a3a" stroke-width="0.6" /><polyline points="505.5,339.2 576,318.7" fill="none" stroke="#6a5238" stroke-width="0.8" /><polygon points="433,359 501.5,340 501.5,374" fill="#bcc4c1" stroke="#3a3a3a" stroke-width="0.8" /><polygon points="433,359 501.5,374 501.5,379 433,364" fill="#e4e6e2" stroke="#5a5a5a" stroke-width="0.5" /><polygon points="433,444 501.5,416.5 501.5,461.5" fill="#bcc4c1" stroke="#3a3a3a" stroke-width="0.8" /><polygon points="433,444 501.5,461.5 501.5,466.5 433,449" fill="#e4e6e2" stroke="#5a5a5a" stroke-width="0.5" /><polygon points="434,528 501,499 501,550" fill="#bcc4c1" stroke="#3a3a3a" stroke-width="0.8" /><polygon points="434,528 501,550 501,555 434,533" fill="#e4e6e2" stroke="#5a5a5a" stroke-width="0.5" /><polygon points="434,610 501,576.5 501,633" fill="#bcc4c1" stroke="#3a3a3a" stroke-width="0.8" /><polygon points="434,610 501,633 501,637.5 434,614.5" fill="#e4e6e2" stroke="#5a5a5a" stroke-width="0.5" /><polygon points="434.5,615 455,622 433,634" fill="#a4b2b2" stroke="#4a4a4a" stroke-width="0.6" /><polygon points="430,328 434,328.5 434.5,634 431,635" fill="#dfe2dd" stroke="#5a5a5a" stroke-width="0.6" /><polygon points="256.5,76 282,78.5 288,295 263,290.5" fill="#cbcfc5" stroke="#4a4a4a" stroke-width="0.8" /><polygon points="282,78.5 426.5,96.5 429,325 288,295" fill="#cbcfc5" /><polygon points="263,290.5 288.5,295.5 297,590 273,584" fill="#cbcfc5" stroke="#4a4a4a" stroke-width="0.8" /><polygon points="288.5,295.5 291.5,296 299,589 297,590" fill="#e2e4de" stroke="#5a5a5a" stroke-width="0.5" /><polygon points="291.5,296 343,307.5 346.5,555 298,577" fill="url(#wood2)" stroke="#4a3a2a" stroke-width="0.7" filter="url(#wn)"/><polygon points="343,307.5 429,325 430,580 346.5,555" fill="#cbcfc5" stroke="#5a5a5a" stroke-width="0.7" /><polyline points="282,78.5 426.5,96.5 429,325 288,295 282,78.5" fill="none" stroke="#e9ed3c" stroke-width="1.7" /><polyline points="351.5,87 355,310" fill="none" stroke="#e9ed3c" stroke-width="1.7" /><polyline points="424,96.3 426.3,324.3" fill="none" stroke="#e9ed3c" stroke-width="1.3" /><polygon points="424.6,97 426,97.2 428.3,324 427,323.8" fill="#dfe2c0" /><polyline points="256.5,76 263,290.5 273,584" fill="none" stroke="#4a4a4a" stroke-width="0.9" /><g transform="translate(575.5,316.5)"><path d="M.5 -22 V-3 M-11 -2 H-2" stroke="#1c9a86" stroke-width="1.800" fill="none"/><circle cx="0" cy="0" r="3" fill="#1c9a86" stroke="#0a4a40" stroke-width="1"/><g transform="rotate(-42)"><path d="M1 0 L6 0" stroke="#7ad0c0" stroke-width="1.200"/><path d="M5 -4.200 L6.800 -4.200 L7.800 -2 L12.500 -2.300 L13 -3.600 L16.500 -3.600 L16.500 3.600 L13 3.600 L12.500 2.300 L7.800 2 L6.800 4.200 L5 4.200Z" fill="#f4f4f4" stroke="#111" stroke-width="1.100" stroke-linejoin="round"/></g></g><g transform="translate(38,652)" font-family="Liberation Sans,sans-serif" font-size="9"><path d="M0 0 V-14" stroke="#1a3ad0" stroke-width="2"/><path d="M-2.500 -12 L0 -20 L2.500 -12Z" fill="#1a3ad0"/><path d="M0 0 L9 -4" stroke="#18a838" stroke-width="2"/><path d="M0 0 L14 3" stroke="#e02818" stroke-width="2.500"/><path d="M2 3 L10 -1 L16 5 L6 6Z" fill="#f07868" opacity=".8"/><text x="-3" y="-23" fill="#1a3ad0">z</text><text x="14" y="-3" fill="#18a838">Y</text><text x="19" y="9" fill="#e02818">X</text></g></svg>
<div style="left:0px;top:186px;width:211px;height:690px;background:#eeeeee"></div><div style="left:3px;top:186px;width:205px;height:24px;background:#e8e8e8"></div><span class="t" style="left:7.5px;top:190px;color:#555;letter-spacing:-.6px">Scene</span><svg style="left:152px;top:195px;" width="9" height="6" viewBox="0 0 9 6"><path d="M0 0 H9 L4.500 5.500Z" fill="#555"/></svg><svg style="left:171px;top:192px;" width="9" height="12" viewBox="0 0 9 12"><path d="M2.500 1 H6.500 M3 1 V6 M6 1 V6 M1 6.500 H8 M4.500 6.500 V11" stroke="#555" stroke-width="1.200" fill="none"/></svg><svg style="left:190px;top:193px;" width="9" height="9" viewBox="0 0 9 9"><path d="M1 1 L8 8 M8 1 L1 8" stroke="#555" stroke-width="1.300"/></svg><div style="left:3px;top:210px;width:162px;height:19px;background:#fff"></div><span class="t" style="left:6.5px;top:211px;color:#666;letter-spacing:-.35px">Cerca ...</span><div style="left:166px;top:211px;width:18px;height:18px;background:#f4ecea;border:1px solid #c8c0c0"></div><svg style="left:169px;top:214px;" width="12" height="12" viewBox="0 0 12 12"><path d="M1 1 L11 11 M11 1 L1 11" stroke="#e03020" stroke-width="1.800"/></svg><svg style="left:188px;top:212px;" width="16" height="16" viewBox="0 0 16 16"><path d="M3 0 l.8 2 l2 .8 l-2 .8 l-.8 2 l-.8 -2 l-2 -.8 l2 -.8Z" fill="#e8c020"/><g fill="none" stroke="#7ab0d0" stroke-width=".9"><rect x="8" y="3" width="3" height="3"/><rect x="6" y="8" width="3" height="3"/><rect x="10.500" y="8" width="3" height="3"/><rect x="4" y="12.500" width="3" height="3"/><rect x="8" y="12.500" width="3" height="3"/><rect x="12" y="12.500" width="3" height="3"/></g></svg><div style="left:3px;top:231px;width:202px;height:621px;background:#fff;border:1px solid #a0a0a0"></div><div style="left:16px;top:251px;width:1px;height:441px;background-image:linear-gradient(#999 50%,transparent 50%);background-size:1px 2px"></div><div style="left:35px;top:287px;width:1px;height:153px;background-image:linear-gradient(#999 50%,transparent 50%);background-size:1px 2px"></div><div style="left:35px;top:467px;width:1px;height:189px;background-image:linear-gradient(#999 50%,transparent 50%);background-size:1px 2px"></div><svg style="left:6px;top:233px;" width="18" height="18" viewBox="0 0 18 18"><path d="M1 6 L7 9 L17 4 L15 11 L10 15 L3 12 L6 9Z" fill="#e01010"/><path d="M6 9 L10 11 L10 15 L3 12Z" fill="#900808"/><path d="M3 15 L9 17.500 L15 14" stroke="#c01010" stroke-width="1.500" fill="none"/><path d="M8 2 l1 2 M3 3 l2 1 M13 1 l-1 2" stroke="#e03030" stroke-width="1.200"/></svg><div style="left:29px;top:234px;width:175px;height:16px;overflow:hidden"><span class="t" style="left:0px;top:0px;letter-spacing:0px">D:\IronCAD\Oikema\esempi oiKe</span></div><div style="left:21px;top:260px;width:6px;height:1px;background-image:linear-gradient(90deg,#999 50%,transparent 50%);background-size:2px 1px"></div><svg style="left:11.5px;top:255.5px;" width="9" height="9" viewBox="0 0 9 9"><rect x=".5" y=".5" width="8" height="8" fill="#fff" stroke="#969696"/><path d="M2.500 4.500 H6.500" stroke="#444" stroke-width="1"/><path d="M4.500 2.500 V6.500" stroke="#444" stroke-width="1"/></svg><svg style="left:27px;top:251px;" width="17" height="17" viewBox="0 0 17 17"><path d="M6 2 V12 H15 M6 12 L1.500 16" stroke="#222" stroke-width="1.600" fill="none"/><path d="M3.500 4 L6 0 L8.500 4Z M13 9.500 L17 12 L13 14.500Z" fill="#222"/></svg><span class="t" style="left:48px;top:252px;letter-spacing:-.1px;">Global Coordinate System</span><div style="left:21px;top:278px;width:6px;height:1px;background-image:linear-gradient(90deg,#999 50%,transparent 50%);background-size:2px 1px"></div><svg style="left:11.5px;top:273.5px;" width="9" height="9" viewBox="0 0 9 9"><rect x=".5" y=".5" width="8" height="8" fill="#fff" stroke="#969696"/><path d="M2.500 4.500 H6.500" stroke="#444" stroke-width="1"/></svg><svg style="left:27px;top:269px;" width="17" height="17" viewBox="0 0 17 17"><path d="M.8 3.500 L4.500 1.300 L15.500 9.500 V14 L12 16.200 L.8 8Z" fill="#e8cc28" stroke="#1a2488" stroke-width="1" stroke-linejoin="round"/><path d="M.8 3.500 L4.500 1.300 L15.500 9.500 L12 11.700Z" fill="#f4e04a" stroke="#1a2488" stroke-width=".8" stroke-linejoin="round"/><path d="M12 11.700 V16.200 L15.500 14 V9.500Z" fill="#c8a818" stroke="#1a2488" stroke-width=".8" stroke-linejoin="round"/><path d="M5.500 3 L9 1 L14.300 4.500 V9.500 L10.800 11.500 L5.500 8Z" fill="#5a9ae8" stroke="#1a2488" stroke-width="1" stroke-linejoin="round"/><path d="M5.500 3 L9 1 L14.300 4.500 L10.800 6.500Z" fill="#9cc8f4" stroke="#1a2488" stroke-width=".7" stroke-linejoin="round"/><path d="M10.800 6.500 V11.500 L14.300 9.500 V4.500Z" fill="#3a78d0" stroke="#1a2488" stroke-width=".7" stroke-linejoin="round"/></svg><span class="t" style="left:48px;top:270px;letter-spacing:-.1px;">ModuloINF</span><div style="left:40px;top:296px;width:6px;height:1px;background-image:linear-gradient(90deg,#999 50%,transparent 50%);background-size:2px 1px"></div><svg style="left:30.5px;top:291.5px;" width="9" height="9" viewBox="0 0 9 9"><rect x=".5" y=".5" width="8" height="8" fill="#fff" stroke="#969696"/><path d="M2.500 4.500 H6.500" stroke="#444" stroke-width="1"/><path d="M4.500 2.500 V6.500" stroke="#444" stroke-width="1"/></svg><svg style="left:46px;top:287px;" width="17" height="17" viewBox="0 0 17 17"><path d="M.8 3.500 L4.500 1.300 L15.500 9.500 V14 L12 16.200 L.8 8Z" fill="#e8cc28" stroke="#1a2488" stroke-width="1" stroke-linejoin="round"/><path d="M.8 3.500 L4.500 1.300 L15.500 9.500 L12 11.700Z" fill="#f4e04a" stroke="#1a2488" stroke-width=".8" stroke-linejoin="round"/><path d="M12 11.700 V16.200 L15.500 14 V9.500Z" fill="#c8a818" stroke="#1a2488" stroke-width=".8" stroke-linejoin="round"/><path d="M5.500 3 L9 1 L14.300 4.500 V9.500 L10.800 11.500 L5.500 8Z" fill="#5a9ae8" stroke="#1a2488" stroke-width="1" stroke-linejoin="round"/><path d="M5.500 3 L9 1 L14.300 4.500 L10.800 6.500Z" fill="#9cc8f4" stroke="#1a2488" stroke-width=".7" stroke-linejoin="round"/><path d="M10.800 6.500 V11.500 L14.300 9.500 V4.500Z" fill="#3a78d0" stroke="#1a2488" stroke-width=".7" stroke-linejoin="round"/></svg><span class="t" style="left:67.5px;top:288px;letter-spacing:-.1px;">Top</span><div style="left:40px;top:314px;width:6px;height:1px;background-image:linear-gradient(90deg,#999 50%,transparent 50%);background-size:2px 1px"></div><svg style="left:30.5px;top:309.5px;" width="9" height="9" viewBox="0 0 9 9"><rect x=".5" y=".5" width="8" height="8" fill="#fff" stroke="#969696"/><path d="M2.500 4.500 H6.500" stroke="#444" stroke-width="1"/><path d="M4.500 2.500 V6.500" stroke="#444" stroke-width="1"/></svg><svg style="left:46px;top:305px;" width="17" height="17" viewBox="0 0 17 17"><path d="M.8 3.500 L4.500 1.300 L15.500 9.500 V14 L12 16.200 L.8 8Z" fill="#e8cc28" stroke="#1a2488" stroke-width="1" stroke-linejoin="round"/><path d="M.8 3.500 L4.500 1.300 L15.500 9.500 L12 11.700Z" fill="#f4e04a" stroke="#1a2488" stroke-width=".8" stroke-linejoin="round"/><path d="M12 11.700 V16.200 L15.500 14 V9.500Z" fill="#c8a818" stroke="#1a2488" stroke-width=".8" stroke-linejoin="round"/><path d="M5.500 3 L9 1 L14.300 4.500 V9.500 L10.800 11.500 L5.500 8Z" fill="#5a9ae8" stroke="#1a2488" stroke-width="1" stroke-linejoin="round"/><path d="M5.500 3 L9 1 L14.300 4.500 L10.800 6.500Z" fill="#9cc8f4" stroke="#1a2488" stroke-width=".7" stroke-linejoin="round"/><path d="M10.800 6.500 V11.500 L14.300 9.500 V4.500Z" fill="#3a78d0" stroke="#1a2488" stroke-width=".7" stroke-linejoin="round"/></svg><span class="t" style="left:67.5px;top:306px;letter-spacing:-.1px;">Laterale</span><div style="left:40px;top:332px;width:6px;height:1px;background-image:linear-gradient(90deg,#999 50%,transparent 50%);background-size:2px 1px"></div><svg style="left:30.5px;top:327.5px;" width="9" height="9" viewBox="0 0 9 9"><rect x=".5" y=".5" width="8" height="8" fill="#fff" stroke="#969696"/><path d="M2.500 4.500 H6.500" stroke="#444" stroke-width="1"/><path d="M4.500 2.500 V6.500" stroke="#444" stroke-width="1"/></svg><svg style="left:46px;top:323px;" width="17" height="17" viewBox="0 0 17 17"><path d="M.8 3.500 L4.500 1.300 L15.500 9.500 V14 L12 16.200 L.8 8Z" fill="#e8cc28" stroke="#1a2488" stroke-width="1" stroke-linejoin="round"/><path d="M.8 3.500 L4.500 1.300 L15.500 9.500 L12 11.700Z" fill="#f4e04a" stroke="#1a2488" stroke-width=".8" stroke-linejoin="round"/><path d="M12 11.700 V16.200 L15.500 14 V9.500Z" fill="#c8a818" stroke="#1a2488" stroke-width=".8" stroke-linejoin="round"/><path d="M5.500 3 L9 1 L14.300 4.500 V9.500 L10.800 11.500 L5.500 8Z" fill="#5a9ae8" stroke="#1a2488" stroke-width="1" stroke-linejoin="round"/><path d="M5.500 3 L9 1 L14.300 4.500 L10.800 6.500Z" fill="#9cc8f4" stroke="#1a2488" stroke-width=".7" stroke-linejoin="round"/><path d="M10.800 6.500 V11.500 L14.300 9.500 V4.500Z" fill="#3a78d0" stroke="#1a2488" stroke-width=".7" stroke-linejoin="round"/></svg><span class="t" style="left:67.5px;top:324px;letter-spacing:-.1px;">Laterale</span><div style="left:40px;top:350px;width:6px;height:1px;background-image:linear-gradient(90deg,#999 50%,transparent 50%);background-size:2px 1px"></div><svg style="left:30.5px;top:345.5px;" width="9" height="9" viewBox="0 0 9 9"><rect x=".5" y=".5" width="8" height="8" fill="#fff" stroke="#969696"/><path d="M2.500 4.500 H6.500" stroke="#444" stroke-width="1"/><path d="M4.500 2.500 V6.500" stroke="#444" stroke-width="1"/></svg><svg style="left:46px;top:341px;" width="17" height="17" viewBox="0 0 17 17"><path d="M.8 3.500 L4.500 1.300 L15.500 9.500 V14 L12 16.200 L.8 8Z" fill="#e8cc28" stroke="#1a2488" stroke-width="1" stroke-linejoin="round"/><path d="M.8 3.500 L4.500 1.300 L15.500 9.500 L12 11.700Z" fill="#f4e04a" stroke="#1a2488" stroke-width=".8" stroke-linejoin="round"/><path d="M12 11.700 V16.200 L15.500 14 V9.500Z" fill="#c8a818" stroke="#1a2488" stroke-width=".8" stroke-linejoin="round"/><path d="M5.500 3 L9 1 L14.300 4.500 V9.500 L10.800 11.500 L5.500 8Z" fill="#5a9ae8" stroke="#1a2488" stroke-width="1" stroke-linejoin="round"/><path d="M5.500 3 L9 1 L14.300 4.500 L10.800 6.500Z" fill="#9cc8f4" stroke="#1a2488" stroke-width=".7" stroke-linejoin="round"/><path d="M10.800 6.500 V11.500 L14.300 9.500 V4.500Z" fill="#3a78d0" stroke="#1a2488" stroke-width=".7" stroke-linejoin="round"/></svg><span class="t" style="left:67.5px;top:342px;letter-spacing:-.1px;">Schiena</span><div style="left:40px;top:368px;width:6px;height:1px;background-image:linear-gradient(90deg,#999 50%,transparent 50%);background-size:2px 1px"></div><svg style="left:30.5px;top:363.5px;" width="9" height="9" viewBox="0 0 9 9"><rect x=".5" y=".5" width="8" height="8" fill="#fff" stroke="#969696"/><path d="M2.500 4.500 H6.500" stroke="#444" stroke-width="1"/><path d="M4.500 2.500 V6.500" stroke="#444" stroke-width="1"/></svg><svg style="left:46px;top:359px;" width="17" height="17" viewBox="0 0 17 17"><path d="M.8 3.500 L4.500 1.300 L15.500 9.500 V14 L12 16.200 L.8 8Z" fill="#e8cc28" stroke="#1a2488" stroke-width="1" stroke-linejoin="round"/><path d="M.8 3.500 L4.500 1.300 L15.500 9.500 L12 11.700Z" fill="#f4e04a" stroke="#1a2488" stroke-width=".8" stroke-linejoin="round"/><path d="M12 11.700 V16.200 L15.500 14 V9.500Z" fill="#c8a818" stroke="#1a2488" stroke-width=".8" stroke-linejoin="round"/><path d="M5.500 3 L9 1 L14.300 4.500 V9.500 L10.800 11.500 L5.500 8Z" fill="#5a9ae8" stroke="#1a2488" stroke-width="1" stroke-linejoin="round"/><path d="M5.500 3 L9 1 L14.300 4.500 L10.800 6.500Z" fill="#9cc8f4" stroke="#1a2488" stroke-width=".7" stroke-linejoin="round"/><path d="M10.800 6.500 V11.500 L14.300 9.500 V4.500Z" fill="#3a78d0" stroke="#1a2488" stroke-width=".7" stroke-linejoin="round"/></svg><span class="t" style="left:67.5px;top:360px;letter-spacing:-.1px;">Frontale</span><div style="left:40px;top:386px;width:6px;height:1px;background-image:linear-gradient(90deg,#999 50%,transparent 50%);background-size:2px 1px"></div><svg style="left:30.5px;top:381.5px;" width="9" height="9" viewBox="0 0 9 9"><rect x=".5" y=".5" width="8" height="8" fill="#fff" stroke="#969696"/><path d="M2.500 4.500 H6.500" stroke="#444" stroke-width="1"/><path d="M4.500 2.500 V6.500" stroke="#444" stroke-width="1"/></svg><svg style="left:46px;top:377px;" width="17" height="17" viewBox="0 0 17 17"><path d="M.8 3.500 L4.500 1.300 L15.500 9.500 V14 L12 16.200 L.8 8Z" fill="#e8cc28" stroke="#1a2488" stroke-width="1" stroke-linejoin="round"/><path d="M.8 3.500 L4.500 1.300 L15.500 9.500 L12 11.700Z" fill="#f4e04a" stroke="#1a2488" stroke-width=".8" stroke-linejoin="round"/><path d="M12 11.700 V16.200 L15.500 14 V9.500Z" fill="#c8a818" stroke="#1a2488" stroke-width=".8" stroke-linejoin="round"/><path d="M5.500 3 L9 1 L14.300 4.500 V9.500 L10.800 11.500 L5.500 8Z" fill="#5a9ae8" stroke="#1a2488" stroke-width="1" stroke-linejoin="round"/><path d="M5.500 3 L9 1 L14.300 4.500 L10.800 6.500Z" fill="#9cc8f4" stroke="#1a2488" stroke-width=".7" stroke-linejoin="round"/><path d="M10.800 6.500 V11.500 L14.300 9.500 V4.500Z" fill="#3a78d0" stroke="#1a2488" stroke-width=".7" stroke-linejoin="round"/></svg><span class="t" style="left:67.5px;top:378px;letter-spacing:-.1px;">Spalla</span><div style="left:40px;top:404px;width:6px;height:1px;background-image:linear-gradient(90deg,#999 50%,transparent 50%);background-size:2px 1px"></div><svg style="left:30.5px;top:399.5px;" width="9" height="9" viewBox="0 0 9 9"><rect x=".5" y=".5" width="8" height="8" fill="#fff" stroke="#969696"/><path d="M2.500 4.500 H6.500" stroke="#444" stroke-width="1"/><path d="M4.500 2.500 V6.500" stroke="#444" stroke-width="1"/></svg><svg style="left:46px;top:395px;" width="17" height="17" viewBox="0 0 17 17"><path d="M.8 3.500 L4.500 1.300 L15.500 9.500 V14 L12 16.200 L.8 8Z" fill="#e8cc28" stroke="#1a2488" stroke-width="1" stroke-linejoin="round"/><path d="M.8 3.500 L4.500 1.300 L15.500 9.500 L12 11.700Z" fill="#f4e04a" stroke="#1a2488" stroke-width=".8" stroke-linejoin="round"/><path d="M12 11.700 V16.200 L15.500 14 V9.500Z" fill="#c8a818" stroke="#1a2488" stroke-width=".8" stroke-linejoin="round"/><path d="M5.500 3 L9 1 L14.300 4.500 V9.500 L10.800 11.500 L5.500 8Z" fill="#5a9ae8" stroke="#1a2488" stroke-width="1" stroke-linejoin="round"/><path d="M5.500 3 L9 1 L14.300 4.500 L10.800 6.500Z" fill="#9cc8f4" stroke="#1a2488" stroke-width=".7" stroke-linejoin="round"/><path d="M10.800 6.500 V11.500 L14.300 9.500 V4.500Z" fill="#3a78d0" stroke="#1a2488" stroke-width=".7" stroke-linejoin="round"/></svg><span class="t" style="left:67.5px;top:396px;letter-spacing:-.1px;">Ripiano</span><div style="left:40px;top:422px;width:6px;height:1px;background-image:linear-gradient(90deg,#999 50%,transparent 50%);background-size:2px 1px"></div><svg style="left:30.5px;top:417.5px;" width="9" height="9" viewBox="0 0 9 9"><rect x=".5" y=".5" width="8" height="8" fill="#fff" stroke="#969696"/><path d="M2.500 4.500 H6.500" stroke="#444" stroke-width="1"/><path d="M4.500 2.500 V6.500" stroke="#444" stroke-width="1"/></svg><svg style="left:46px;top:413px;" width="17" height="17" viewBox="0 0 17 17"><path d="M.8 3.500 L4.500 1.300 L15.500 9.500 V14 L12 16.200 L.8 8Z" fill="#fff" stroke="#222" stroke-width="1" stroke-linejoin="round"/><path d="M.8 3.500 L4.500 1.300 L15.500 9.500 L12 11.700Z" fill="#fff" stroke="#222" stroke-width=".8" stroke-linejoin="round"/><path d="M12 11.700 V16.200 L15.500 14 V9.500Z" fill="#fff" stroke="#222" stroke-width=".8" stroke-linejoin="round"/><path d="M5.500 3 L9 1 L14.300 4.500 V9.500 L10.800 11.500 L5.500 8Z" fill="#fff" stroke="#222" stroke-width="1" stroke-linejoin="round"/><path d="M5.500 3 L9 1 L14.300 4.500 L10.800 6.500Z" fill="#fff" stroke="#222" stroke-width=".7" stroke-linejoin="round"/><path d="M10.800 6.500 V11.500 L14.300 9.500 V4.500Z" fill="#fff" stroke="#222" stroke-width=".7" stroke-linejoin="round"/></svg><span class="t" style="left:67.5px;top:414px;letter-spacing:-.1px;">Anta</span><div style="left:40px;top:440px;width:6px;height:1px;background-image:linear-gradient(90deg,#999 50%,transparent 50%);background-size:2px 1px"></div><svg style="left:30.5px;top:435.5px;" width="9" height="9" viewBox="0 0 9 9"><rect x=".5" y=".5" width="8" height="8" fill="#fff" stroke="#969696"/><path d="M2.500 4.500 H6.500" stroke="#444" stroke-width="1"/><path d="M4.500 2.500 V6.500" stroke="#444" stroke-width="1"/></svg><svg style="left:46px;top:431px;" width="17" height="17" viewBox="0 0 17 17"><path d="M.8 3.500 L4.500 1.300 L15.500 9.500 V14 L12 16.200 L.8 8Z" fill="#fff" stroke="#222" stroke-width="1" stroke-linejoin="round"/><path d="M.8 3.500 L4.500 1.300 L15.500 9.500 L12 11.700Z" fill="#fff" stroke="#222" stroke-width=".8" stroke-linejoin="round"/><path d="M12 11.700 V16.200 L15.500 14 V9.500Z" fill="#fff" stroke="#222" stroke-width=".8" stroke-linejoin="round"/><path d="M5.500 3 L9 1 L14.300 4.500 V9.500 L10.800 11.500 L5.500 8Z" fill="#fff" stroke="#222" stroke-width="1" stroke-linejoin="round"/><path d="M5.500 3 L9 1 L14.300 4.500 L10.800 6.500Z" fill="#fff" stroke="#222" stroke-width=".7" stroke-linejoin="round"/><path d="M10.800 6.500 V11.500 L14.300 9.500 V4.500Z" fill="#fff" stroke="#222" stroke-width=".7" stroke-linejoin="round"/></svg><span class="t" style="left:67.5px;top:432px;letter-spacing:-.1px;">Anta</span><div style="left:21px;top:458px;width:6px;height:1px;background-image:linear-gradient(90deg,#999 50%,transparent 50%);background-size:2px 1px"></div><svg style="left:11.5px;top:453.5px;" width="9" height="9" viewBox="0 0 9 9"><rect x=".5" y=".5" width="8" height="8" fill="#fff" stroke="#969696"/><path d="M2.500 4.500 H6.500" stroke="#444" stroke-width="1"/></svg><svg style="left:27px;top:449px;" width="17" height="17" viewBox="0 0 17 17"><path d="M.8 3.500 L4.500 1.300 L15.500 9.500 V14 L12 16.200 L.8 8Z" fill="#e8cc28" stroke="#1a2488" stroke-width="1" stroke-linejoin="round"/><path d="M.8 3.500 L4.500 1.300 L15.500 9.500 L12 11.700Z" fill="#f4e04a" stroke="#1a2488" stroke-width=".8" stroke-linejoin="round"/><path d="M12 11.700 V16.200 L15.500 14 V9.500Z" fill="#c8a818" stroke="#1a2488" stroke-width=".8" stroke-linejoin="round"/><path d="M5.500 3 L9 1 L14.300 4.500 V9.500 L10.800 11.500 L5.500 8Z" fill="#5a9ae8" stroke="#1a2488" stroke-width="1" stroke-linejoin="round"/><path d="M5.500 3 L9 1 L14.300 4.500 L10.800 6.500Z" fill="#9cc8f4" stroke="#1a2488" stroke-width=".7" stroke-linejoin="round"/><path d="M10.800 6.500 V11.500 L14.300 9.500 V4.500Z" fill="#3a78d0" stroke="#1a2488" stroke-width=".7" stroke-linejoin="round"/></svg><span class="t" style="left:48px;top:450px;letter-spacing:-.1px;font-weight:bold;letter-spacing:-.4px;">ModuloSUP</span><div style="left:40px;top:476px;width:6px;height:1px;background-image:linear-gradient(90deg,#999 50%,transparent 50%);background-size:2px 1px"></div><svg style="left:30.5px;top:471.5px;" width="9" height="9" viewBox="0 0 9 9"><rect x=".5" y=".5" width="8" height="8" fill="#fff" stroke="#969696"/><path d="M2.500 4.500 H6.500" stroke="#444" stroke-width="1"/><path d="M4.500 2.500 V6.500" stroke="#444" stroke-width="1"/></svg><svg style="left:46px;top:467px;" width="17" height="17" viewBox="0 0 17 17"><path d="M.8 3.500 L4.500 1.300 L15.500 9.500 V14 L12 16.200 L.8 8Z" fill="#e8cc28" stroke="#1a2488" stroke-width="1" stroke-linejoin="round"/><path d="M.8 3.500 L4.500 1.300 L15.500 9.500 L12 11.700Z" fill="#f4e04a" stroke="#1a2488" stroke-width=".8" stroke-linejoin="round"/><path d="M12 11.700 V16.200 L15.500 14 V9.500Z" fill="#c8a818" stroke="#1a2488" stroke-width=".8" stroke-linejoin="round"/><path d="M5.500 3 L9 1 L14.300 4.500 V9.500 L10.800 11.500 L5.500 8Z" fill="#5a9ae8" stroke="#1a2488" stroke-width="1" stroke-linejoin="round"/><path d="M5.500 3 L9 1 L14.300 4.500 L10.800 6.500Z" fill="#9cc8f4" stroke="#1a2488" stroke-width=".7" stroke-linejoin="round"/><path d="M10.800 6.500 V11.500 L14.300 9.500 V4.500Z" fill="#3a78d0" stroke="#1a2488" stroke-width=".7" stroke-linejoin="round"/></svg><span class="t" style="left:67.5px;top:468px;letter-spacing:-.1px;">Top</span><div style="left:40px;top:494px;width:6px;height:1px;background-image:linear-gradient(90deg,#999 50%,transparent 50%);background-size:2px 1px"></div><svg style="left:30.5px;top:489.5px;" width="9" height="9" viewBox="0 0 9 9"><rect x=".5" y=".5" width="8" height="8" fill="#fff" stroke="#969696"/><path d="M2.500 4.500 H6.500" stroke="#444" stroke-width="1"/><path d="M4.500 2.500 V6.500" stroke="#444" stroke-width="1"/></svg><svg style="left:46px;top:485px;" width="17" height="17" viewBox="0 0 17 17"><path d="M.8 3.500 L4.500 1.300 L15.500 9.500 V14 L12 16.200 L.8 8Z" fill="#e8cc28" stroke="#1a2488" stroke-width="1" stroke-linejoin="round"/><path d="M.8 3.500 L4.500 1.300 L15.500 9.500 L12 11.700Z" fill="#f4e04a" stroke="#1a2488" stroke-width=".8" stroke-linejoin="round"/><path d="M12 11.700 V16.200 L15.500 14 V9.500Z" fill="#c8a818" stroke="#1a2488" stroke-width=".8" stroke-linejoin="round"/><path d="M5.500 3 L9 1 L14.300 4.500 V9.500 L10.800 11.500 L5.500 8Z" fill="#5a9ae8" stroke="#1a2488" stroke-width="1" stroke-linejoin="round"/><path d="M5.500 3 L9 1 L14.300 4.500 L10.800 6.500Z" fill="#9cc8f4" stroke="#1a2488" stroke-width=".7" stroke-linejoin="round"/><path d="M10.800 6.500 V11.500 L14.300 9.500 V4.500Z" fill="#3a78d0" stroke="#1a2488" stroke-width=".7" stroke-linejoin="round"/></svg><span class="t" style="left:67.5px;top:486px;letter-spacing:-.1px;">Laterale</span><div style="left:40px;top:512px;width:6px;height:1px;background-image:linear-gradient(90deg,#999 50%,transparent 50%);background-size:2px 1px"></div><svg style="left:30.5px;top:507.5px;" width="9" height="9" viewBox="0 0 9 9"><rect x=".5" y=".5" width="8" height="8" fill="#fff" stroke="#969696"/><path d="M2.500 4.500 H6.500" stroke="#444" stroke-width="1"/><path d="M4.500 2.500 V6.500" stroke="#444" stroke-width="1"/></svg><svg style="left:46px;top:503px;" width="17" height="17" viewBox="0 0 17 17"><path d="M.8 3.500 L4.500 1.300 L15.500 9.500 V14 L12 16.200 L.8 8Z" fill="#e8cc28" stroke="#1a2488" stroke-width="1" stroke-linejoin="round"/><path d="M.8 3.500 L4.500 1.300 L15.500 9.500 L12 11.700Z" fill="#f4e04a" stroke="#1a2488" stroke-width=".8" stroke-linejoin="round"/><path d="M12 11.700 V16.200 L15.500 14 V9.500Z" fill="#c8a818" stroke="#1a2488" stroke-width=".8" stroke-linejoin="round"/><path d="M5.500 3 L9 1 L14.300 4.500 V9.500 L10.800 11.500 L5.500 8Z" fill="#5a9ae8" stroke="#1a2488" stroke-width="1" stroke-linejoin="round"/><path d="M5.500 3 L9 1 L14.300 4.500 L10.800 6.500Z" fill="#9cc8f4" stroke="#1a2488" stroke-width=".7" stroke-linejoin="round"/><path d="M10.800 6.500 V11.500 L14.300 9.500 V4.500Z" fill="#3a78d0" stroke="#1a2488" stroke-width=".7" stroke-linejoin="round"/></svg><span class="t" style="left:67.5px;top:504px;letter-spacing:-.1px;">Laterale</span><div style="left:40px;top:530px;width:6px;height:1px;background-image:linear-gradient(90deg,#999 50%,transparent 50%);background-size:2px 1px"></div><svg style="left:30.5px;top:525.5px;" width="9" height="9" viewBox="0 0 9 9"><rect x=".5" y=".5" width="8" height="8" fill="#fff" stroke="#969696"/><path d="M2.500 4.500 H6.500" stroke="#444" stroke-width="1"/><path d="M4.500 2.500 V6.500" stroke="#444" stroke-width="1"/></svg><svg style="left:46px;top:521px;" width="17" height="17" viewBox="0 0 17 17"><path d="M.8 3.500 L4.500 1.300 L15.500 9.500 V14 L12 16.200 L.8 8Z" fill="#e8cc28" stroke="#1a2488" stroke-width="1" stroke-linejoin="round"/><path d="M.8 3.500 L4.500 1.300 L15.500 9.500 L12 11.700Z" fill="#f4e04a" stroke="#1a2488" stroke-width=".8" stroke-linejoin="round"/><path d="M12 11.700 V16.200 L15.500 14 V9.500Z" fill="#c8a818" stroke="#1a2488" stroke-width=".8" stroke-linejoin="round"/><path d="M5.500 3 L9 1 L14.300 4.500 V9.500 L10.800 11.500 L5.500 8Z" fill="#5a9ae8" stroke="#1a2488" stroke-width="1" stroke-linejoin="round"/><path d="M5.500 3 L9 1 L14.300 4.500 L10.800 6.500Z" fill="#9cc8f4" stroke="#1a2488" stroke-width=".7" stroke-linejoin="round"/><path d="M10.800 6.500 V11.500 L14.300 9.500 V4.500Z" fill="#3a78d0" stroke="#1a2488" stroke-width=".7" stroke-linejoin="round"/></svg><span class="t" style="left:67.5px;top:522px;letter-spacing:-.1px;">Fondo</span><div style="left:40px;top:548px;width:6px;height:1px;background-image:linear-gradient(90deg,#999 50%,transparent 50%);background-size:2px 1px"></div><svg style="left:30.5px;top:543.5px;" width="9" height="9" viewBox="0 0 9 9"><rect x=".5" y=".5" width="8" height="8" fill="#fff" stroke="#969696"/><path d="M2.500 4.500 H6.500" stroke="#444" stroke-width="1"/><path d="M4.500 2.500 V6.500" stroke="#444" stroke-width="1"/></svg><svg style="left:46px;top:539px;" width="17" height="17" viewBox="0 0 17 17"><path d="M.8 3.500 L4.500 1.300 L15.500 9.500 V14 L12 16.200 L.8 8Z" fill="#e8cc28" stroke="#1a2488" stroke-width="1" stroke-linejoin="round"/><path d="M.8 3.500 L4.500 1.300 L15.500 9.500 L12 11.700Z" fill="#f4e04a" stroke="#1a2488" stroke-width=".8" stroke-linejoin="round"/><path d="M12 11.700 V16.200 L15.500 14 V9.500Z" fill="#c8a818" stroke="#1a2488" stroke-width=".8" stroke-linejoin="round"/><path d="M5.500 3 L9 1 L14.300 4.500 V9.500 L10.800 11.500 L5.500 8Z" fill="#5a9ae8" stroke="#1a2488" stroke-width="1" stroke-linejoin="round"/><path d="M5.500 3 L9 1 L14.300 4.500 L10.800 6.500Z" fill="#9cc8f4" stroke="#1a2488" stroke-width=".7" stroke-linejoin="round"/><path d="M10.800 6.500 V11.500 L14.300 9.500 V4.500Z" fill="#3a78d0" stroke="#1a2488" stroke-width=".7" stroke-linejoin="round"/></svg><span class="t" style="left:67.5px;top:540px;letter-spacing:-.1px;">Schiena</span><div style="left:40px;top:566px;width:6px;height:1px;background-image:linear-gradient(90deg,#999 50%,transparent 50%);background-size:2px 1px"></div><svg style="left:30.5px;top:561.5px;" width="9" height="9" viewBox="0 0 9 9"><rect x=".5" y=".5" width="8" height="8" fill="#fff" stroke="#969696"/><path d="M2.500 4.500 H6.500" stroke="#444" stroke-width="1"/><path d="M4.500 2.500 V6.500" stroke="#444" stroke-width="1"/></svg><svg style="left:46px;top:557px;" width="17" height="17" viewBox="0 0 17 17"><path d="M.8 3.500 L4.500 1.300 L15.500 9.500 V14 L12 16.200 L.8 8Z" fill="#e8cc28" stroke="#1a2488" stroke-width="1" stroke-linejoin="round"/><path d="M.8 3.500 L4.500 1.300 L15.500 9.500 L12 11.700Z" fill="#f4e04a" stroke="#1a2488" stroke-width=".8" stroke-linejoin="round"/><path d="M12 11.700 V16.200 L15.500 14 V9.500Z" fill="#c8a818" stroke="#1a2488" stroke-width=".8" stroke-linejoin="round"/><path d="M5.500 3 L9 1 L14.300 4.500 V9.500 L10.800 11.500 L5.500 8Z" fill="#5a9ae8" stroke="#1a2488" stroke-width="1" stroke-linejoin="round"/><path d="M5.500 3 L9 1 L14.300 4.500 L10.800 6.500Z" fill="#9cc8f4" stroke="#1a2488" stroke-width=".7" stroke-linejoin="round"/><path d="M10.800 6.500 V11.500 L14.300 9.500 V4.500Z" fill="#3a78d0" stroke="#1a2488" stroke-width=".7" stroke-linejoin="round"/></svg><span class="t" style="left:67.5px;top:558px;letter-spacing:-.1px;">Frontale</span><div style="left:40px;top:584px;width:6px;height:1px;background-image:linear-gradient(90deg,#999 50%,transparent 50%);background-size:2px 1px"></div><svg style="left:30.5px;top:579.5px;" width="9" height="9" viewBox="0 0 9 9"><rect x=".5" y=".5" width="8" height="8" fill="#fff" stroke="#969696"/><path d="M2.500 4.500 H6.500" stroke="#444" stroke-width="1"/><path d="M4.500 2.500 V6.500" stroke="#444" stroke-width="1"/></svg><svg style="left:46px;top:575px;" width="17" height="17" viewBox="0 0 17 17"><path d="M.8 3.500 L4.500 1.300 L15.500 9.500 V14 L12 16.200 L.8 8Z" fill="#e8cc28" stroke="#1a2488" stroke-width="1" stroke-linejoin="round"/><path d="M.8 3.500 L4.500 1.300 L15.500 9.500 L12 11.700Z" fill="#f4e04a" stroke="#1a2488" stroke-width=".8" stroke-linejoin="round"/><path d="M12 11.700 V16.200 L15.500 14 V9.500Z" fill="#c8a818" stroke="#1a2488" stroke-width=".8" stroke-linejoin="round"/><path d="M5.500 3 L9 1 L14.300 4.500 V9.500 L10.800 11.500 L5.500 8Z" fill="#5a9ae8" stroke="#1a2488" stroke-width="1" stroke-linejoin="round"/><path d="M5.500 3 L9 1 L14.300 4.500 L10.800 6.500Z" fill="#9cc8f4" stroke="#1a2488" stroke-width=".7" stroke-linejoin="round"/><path d="M10.800 6.500 V11.500 L14.300 9.500 V4.500Z" fill="#3a78d0" stroke="#1a2488" stroke-width=".7" stroke-linejoin="round"/></svg><span class="t" style="left:67.5px;top:576px;letter-spacing:-.1px;">Spalla</span><div style="left:40px;top:602px;width:6px;height:1px;background-image:linear-gradient(90deg,#999 50%,transparent 50%);background-size:2px 1px"></div><svg style="left:30.5px;top:597.5px;" width="9" height="9" viewBox="0 0 9 9"><rect x=".5" y=".5" width="8" height="8" fill="#fff" stroke="#969696"/><path d="M2.500 4.500 H6.500" stroke="#444" stroke-width="1"/><path d="M4.500 2.500 V6.500" stroke="#444" stroke-width="1"/></svg><svg style="left:46px;top:593px;" width="17" height="17" viewBox="0 0 17 17"><path d="M.8 3.500 L4.500 1.300 L15.500 9.500 V14 L12 16.200 L.8 8Z" fill="#e8cc28" stroke="#1a2488" stroke-width="1" stroke-linejoin="round"/><path d="M.8 3.500 L4.500 1.300 L15.500 9.500 L12 11.700Z" fill="#f4e04a" stroke="#1a2488" stroke-width=".8" stroke-linejoin="round"/><path d="M12 11.700 V16.200 L15.500 14 V9.500Z" fill="#c8a818" stroke="#1a2488" stroke-width=".8" stroke-linejoin="round"/><path d="M5.500 3 L9 1 L14.300 4.500 V9.500 L10.800 11.500 L5.500 8Z" fill="#5a9ae8" stroke="#1a2488" stroke-width="1" stroke-linejoin="round"/><path d="M5.500 3 L9 1 L14.300 4.500 L10.800 6.500Z" fill="#9cc8f4" stroke="#1a2488" stroke-width=".7" stroke-linejoin="round"/><path d="M10.800 6.500 V11.500 L14.300 9.500 V4.500Z" fill="#3a78d0" stroke="#1a2488" stroke-width=".7" stroke-linejoin="round"/></svg><span class="t" style="left:67.5px;top:594px;letter-spacing:-.1px;">Ripiano</span><div style="left:40px;top:620px;width:6px;height:1px;background-image:linear-gradient(90deg,#999 50%,transparent 50%);background-size:2px 1px"></div><svg style="left:30.5px;top:615.5px;" width="9" height="9" viewBox="0 0 9 9"><rect x=".5" y=".5" width="8" height="8" fill="#fff" stroke="#969696"/><path d="M2.500 4.500 H6.500" stroke="#444" stroke-width="1"/><path d="M4.500 2.500 V6.500" stroke="#444" stroke-width="1"/></svg><svg style="left:46px;top:611px;" width="17" height="17" viewBox="0 0 17 17"><path d="M.8 3.500 L4.500 1.300 L15.500 9.500 V14 L12 16.200 L.8 8Z" fill="#e8cc28" stroke="#1a2488" stroke-width="1" stroke-linejoin="round"/><path d="M.8 3.500 L4.500 1.300 L15.500 9.500 L12 11.700Z" fill="#f4e04a" stroke="#1a2488" stroke-width=".8" stroke-linejoin="round"/><path d="M12 11.700 V16.200 L15.500 14 V9.500Z" fill="#c8a818" stroke="#1a2488" stroke-width=".8" stroke-linejoin="round"/><path d="M5.500 3 L9 1 L14.300 4.500 V9.500 L10.800 11.500 L5.500 8Z" fill="#5a9ae8" stroke="#1a2488" stroke-width="1" stroke-linejoin="round"/><path d="M5.500 3 L9 1 L14.300 4.500 L10.800 6.500Z" fill="#9cc8f4" stroke="#1a2488" stroke-width=".7" stroke-linejoin="round"/><path d="M10.800 6.500 V11.500 L14.300 9.500 V4.500Z" fill="#3a78d0" stroke="#1a2488" stroke-width=".7" stroke-linejoin="round"/></svg><span class="t" style="left:67.5px;top:612px;letter-spacing:-.1px;">Ripiano</span><div style="left:40px;top:638px;width:6px;height:1px;background-image:linear-gradient(90deg,#999 50%,transparent 50%);background-size:2px 1px"></div><svg style="left:30.5px;top:633.5px;" width="9" height="9" viewBox="0 0 9 9"><rect x=".5" y=".5" width="8" height="8" fill="#fff" stroke="#969696"/><path d="M2.500 4.500 H6.500" stroke="#444" stroke-width="1"/><path d="M4.500 2.500 V6.500" stroke="#444" stroke-width="1"/></svg><svg style="left:46px;top:629px;" width="17" height="17" viewBox="0 0 17 17"><path d="M.8 3.500 L4.500 1.300 L15.500 9.500 V14 L12 16.200 L.8 8Z" fill="#fff" stroke="#222" stroke-width="1" stroke-linejoin="round"/><path d="M.8 3.500 L4.500 1.300 L15.500 9.500 L12 11.700Z" fill="#fff" stroke="#222" stroke-width=".8" stroke-linejoin="round"/><path d="M12 11.700 V16.200 L15.500 14 V9.500Z" fill="#fff" stroke="#222" stroke-width=".8" stroke-linejoin="round"/><path d="M5.500 3 L9 1 L14.300 4.500 V9.500 L10.800 11.500 L5.500 8Z" fill="#fff" stroke="#222" stroke-width="1" stroke-linejoin="round"/><path d="M5.500 3 L9 1 L14.300 4.500 L10.800 6.500Z" fill="#fff" stroke="#222" stroke-width=".7" stroke-linejoin="round"/><path d="M10.800 6.500 V11.500 L14.300 9.500 V4.500Z" fill="#fff" stroke="#222" stroke-width=".7" stroke-linejoin="round"/></svg><span class="t" style="left:67.5px;top:630px;letter-spacing:-.1px;">Anta</span><div style="left:40px;top:656px;width:6px;height:1px;background-image:linear-gradient(90deg,#999 50%,transparent 50%);background-size:2px 1px"></div><svg style="left:30.5px;top:651.5px;" width="9" height="9" viewBox="0 0 9 9"><rect x=".5" y=".5" width="8" height="8" fill="#fff" stroke="#969696"/><path d="M2.500 4.500 H6.500" stroke="#444" stroke-width="1"/><path d="M4.500 2.500 V6.500" stroke="#444" stroke-width="1"/></svg><svg style="left:46px;top:647px;" width="17" height="17" viewBox="0 0 17 17"><path d="M.8 3.500 L4.500 1.300 L15.500 9.500 V14 L12 16.200 L.8 8Z" fill="#e8cc28" stroke="#1a2488" stroke-width="1" stroke-linejoin="round"/><path d="M.8 3.500 L4.500 1.300 L15.500 9.500 L12 11.700Z" fill="#f4e04a" stroke="#1a2488" stroke-width=".8" stroke-linejoin="round"/><path d="M12 11.700 V16.200 L15.500 14 V9.500Z" fill="#c8a818" stroke="#1a2488" stroke-width=".8" stroke-linejoin="round"/><path d="M5.500 3 L9 1 L14.300 4.500 V9.500 L10.800 11.500 L5.500 8Z" fill="#5a9ae8" stroke="#1a2488" stroke-width="1" stroke-linejoin="round"/><path d="M5.500 3 L9 1 L14.300 4.500 L10.800 6.500Z" fill="#9cc8f4" stroke="#1a2488" stroke-width=".7" stroke-linejoin="round"/><path d="M10.800 6.500 V11.500 L14.300 9.500 V4.500Z" fill="#3a78d0" stroke="#1a2488" stroke-width=".7" stroke-linejoin="round"/></svg><div style="left:65px;top:647px;width:30px;height:18px;background:#0078d7"></div><span class="t" style="left:67.5px;top:648px;letter-spacing:-.1px;color:#fff;">Anta</span><div style="left:21px;top:674px;width:6px;height:1px;background-image:linear-gradient(90deg,#999 50%,transparent 50%);background-size:2px 1px"></div><svg style="left:11.5px;top:669.5px;" width="9" height="9" viewBox="0 0 9 9"><rect x=".5" y=".5" width="8" height="8" fill="#fff" stroke="#969696"/><path d="M2.500 4.500 H6.500" stroke="#444" stroke-width="1"/><path d="M4.500 2.500 V6.500" stroke="#444" stroke-width="1"/></svg><svg style="left:27px;top:665px;" width="18" height="17" viewBox="0 0 18 17"><circle cx="5" cy="4" r="3" fill="#222"/><circle cx="11" cy="4" r="3" fill="#222"/><rect x="1" y="7" width="13" height="9" fill="#222"/><rect x="3" y="9" width="9" height="5" fill="#ddd"/><path d="M14 10 L18 8 V15 L14 13Z" fill="#222"/></svg><span class="t" style="left:48px;top:666px;letter-spacing:-.1px;">Telecamere</span><div style="left:21px;top:692px;width:6px;height:1px;background-image:linear-gradient(90deg,#999 50%,transparent 50%);background-size:2px 1px"></div><svg style="left:11.5px;top:687.5px;" width="9" height="9" viewBox="0 0 9 9"><rect x=".5" y=".5" width="8" height="8" fill="#fff" stroke="#969696"/><path d="M2.500 4.500 H6.500" stroke="#444" stroke-width="1"/><path d="M4.500 2.500 V6.500" stroke="#444" stroke-width="1"/></svg><svg style="left:27px;top:683px;" width="18" height="17" viewBox="0 0 18 17"><path d="M1 2 L5 1 L8 6 L4 8Z" fill="#3a5ad0"/><path d="M5 7 L9 5 L16 14 L11 16Z" fill="#f0d8b0" stroke="#866" stroke-width=".8"/><path d="M3 1 l1 5" stroke="#88a" stroke-width="1"/></svg><span class="t" style="left:48px;top:684px;letter-spacing:-.1px;">Luci</span><div style="left:4px;top:835px;width:200px;height:16px;background:#f0f0f0"></div><div style="left:22px;top:835px;width:114px;height:16px;background:#cdcdcd"></div><svg style="left:9px;top:839px;" width="7" height="9" viewBox="0 0 7 9"><path d="M5.500 1 L1.500 4.500 L5.500 8" stroke="#444" stroke-width="1.600" fill="none"/></svg><svg style="left:191px;top:839px;" width="7" height="9" viewBox="0 0 7 9"><path d="M1.500 1 L5.500 4.500 L1.500 8" stroke="#444" stroke-width="1.600" fill="none"/></svg><div style="left:3px;top:852px;width:59px;height:23px;background:#fcfcfc;border:1px solid #c4c4c4;border-top:none"></div><svg style="left:9px;top:856px;" width="12" height="16" viewBox="0 0 12 16"><g fill="none" stroke="#7ab0d0" stroke-width=".9"><rect x="4.500" y="1" width="3" height="3"/><rect x="2.500" y="6" width="3" height="3"/><rect x="6.500" y="6" width="3" height="3"/><rect x=".5" y="11.500" width="3" height="3"/><rect x="4.500" y="11.500" width="3" height="3"/><rect x="8.500" y="11.500" width="3" height="3"/></g></svg><span class="t" style="left:25.5px;top:855px;color:#333;letter-spacing:-.6px">Scene</span><svg style="left:66px;top:855px;" width="17" height="17" viewBox="0 0 17 17"><circle cx="6.500" cy="6.500" r="5.500" fill="#e8f4fa" stroke="#8aa" stroke-width="1"/><path d="M10.500 10.500 L15.500 15.500" stroke="#666" stroke-width="2.500"/></svg><span class="t" style="left:85.5px;top:855px;color:#333;letter-spacing:-.45px">Ricerca</span><svg style="left:137px;top:855px;" width="12" height="17" viewBox="0 0 12 17"><rect x=".5" y=".5" width="10" height="15" fill="#f4f4f4" stroke="#888"/><rect x="1.500" y="1.500" width="6" height="6" fill="#3a6ab0"/><path d="M3 10.500 H9 M3 13 H9" stroke="#666" stroke-width="1"/></svg><span class="t" style="left:152px;top:855px;color:#333;letter-spacing:-.15px">Proprie...</span>
<div style="left:1382px;top:164px;width:218px;height:712px;background:#eeeeee"></div><div style="left:1386px;top:163px;width:214px;height:1px;background:#d8d8d8"></div><div style="left:1386px;top:164px;width:211px;height:24px;background:#e8e8e8"></div><span class="t" style="left:1391.5px;top:168px;color:#555;letter-spacing:-.3px">Oikema Eng</span><svg style="left:1544px;top:174px;" width="9" height="6" viewBox="0 0 9 6"><path d="M0 0 H9 L4.500 5.500Z" fill="#555"/></svg><svg style="left:1563px;top:171px;" width="9" height="12" viewBox="0 0 9 12"><path d="M2.500 1 H6.500 M3 1 V6 M6 1 V6 M1 6.500 H8 M4.500 6.500 V11" stroke="#555" stroke-width="1.200" fill="none"/></svg><svg style="left:1582px;top:172px;" width="9" height="9" viewBox="0 0 9 9"><path d="M1 1 L8 8 M8 1 L1 8" stroke="#555" stroke-width="1.300"/></svg><div style="left:1388px;top:190px;width:49px;height:18px;background:#e4e4e4;border:1px solid #c4c4c4"></div><div style="left:1439px;top:190px;width:50px;height:18px;background:#e4e4e4;border:1px solid #c4c4c4"></div><svg style="left:1444px;top:192px;" width="16" height="15" viewBox="0 0 16 15"><path d="M1 1 H8 V12 H1Z M8 1 L11 3 V14 L8 12" fill="#f4f4f0" stroke="#777" stroke-width=".8"/><path d="M12 6 V13 M10.500 11 L12 13.500 L13.500 11" stroke="#9a9a6a" stroke-width=".9" fill="none"/></svg><span class="t" style="left:1465px;top:192px;font-size:11px;color:#111;letter-spacing:-.15px">Apri</span><div style="left:1491px;top:190px;width:50px;height:18px;background:#e4e4e4;border:1px solid #c4c4c4"></div><svg style="left:1497px;top:191px;" width="14" height="16" viewBox="0 0 14 16"><rect x="4" y="1" width="9" height="9" fill="#fff" stroke="#666" stroke-width=".8"/><rect x="1" y="6" width="9" height="9" fill="#5a6a3a" stroke="#333" stroke-width=".8"/><rect x="3" y="7" width="5" height="3" fill="#eee"/><rect x="4" y="12" width="3" height="3" fill="#ccc"/></svg><span class="t" style="left:1513px;top:192px;font-size:11px;color:#111;letter-spacing:-.15px">Salva</span><div style="left:1543px;top:190px;width:50px;height:18px;background:#e4e4e4;border:1px solid #c4c4c4"></div><svg style="left:1549px;top:192px;" width="16" height="15" viewBox="0 0 16 15"><path d="M1 1 H10 V11 H1Z" fill="#f0f0ec" stroke="#777" stroke-width=".8"/><path d="M11 8 C13 9 13 12 11 13 M9.500 12 L11.500 13.500 L12.500 11.500" stroke="#9a9a6a" stroke-width=".9" fill="none"/></svg><span class="t" style="left:1565px;top:192px;font-size:11px;color:#111;letter-spacing:-.15px">Chi...</span><div style="left:1595px;top:190px;width:2px;height:18px;background:#555"></div><div style="left:1387px;top:210px;width:191px;height:18px;background:#fff"></div><span class="t" style="left:1403.5px;top:211px;color:#666;letter-spacing:-.35px">Cerca ...</span><div style="left:1578px;top:210px;width:18px;height:18px;background:#f4ecea;border:1px solid #c8c0c0"></div><svg style="left:1581px;top:213px;" width="12" height="12" viewBox="0 0 12 12"><path d="M1 1 L11 11 M11 1 L1 11" stroke="#e03020" stroke-width="1.800"/></svg><div style="left:1386px;top:229px;width:211px;height:624px;background:#fff;border:1px solid #b4b4b4"></div><div style="left:1579px;top:230px;width:16px;height:622px;background:#f0f0f0"></div><div style="left:1579px;top:331px;width:15px;height:191px;background:#cdcdcd"></div><svg style="left:1582px;top:237px;" width="10" height="7" viewBox="0 0 10 7"><path d="M1.500 6 L5 2 L8.500 6" stroke="#444" stroke-width="1.800" fill="none"/></svg><svg style="left:1582px;top:837px;" width="10" height="7" viewBox="0 0 10 7"><path d="M1.500 1 L5 5 L8.500 1" stroke="#444" stroke-width="1.800" fill="none"/></svg><svg style="left:1412px;top:236px;overflow:visible" width="50" height="48" viewBox="0 0 50 48"><path d="M0 31 L18 40 L47.500 26 V32.500 L18 47 L0 38Z" fill="#bd6638" stroke="#8a4420" stroke-width=".7" stroke-linejoin="round"/><path d="M0 31 L29.500 17.500 L47.500 26 L18 40Z" fill="#d68a5c" stroke="#8a4420" stroke-width=".7" stroke-linejoin="round"/><path d="M18 40 V47" stroke="#8a4420" stroke-width=".7"/><path d="M18 40 L47.500 26 V32.500 L18 47Z" fill="#c87448" opacity=".6"/><polygon points="23.0,25.0 22.8,27.0 19.8,27.8 19.2,29.1 20.1,32.1 18.6,33.3 15.8,31.8 14.4,32.3 13.0,35.0 11.0,34.8 10.2,31.8 8.9,31.2 5.9,32.1 4.7,30.6 6.2,27.8 5.7,26.4 3.0,25.0 3.2,23.0 6.2,22.2 6.8,20.9 5.9,17.9 7.4,16.7 10.2,18.2 11.6,17.7 13.0,15.0 15.0,15.2 15.8,18.2 17.1,18.8 20.1,17.9 21.3,19.4 19.8,22.2 20.3,23.6" fill="#c8c8c8" stroke="#888" stroke-width=".8"/><circle cx="13" cy="25" r="3.0" fill="#f4f4f4" stroke="#888" stroke-width=".8"/><polygon points="35.0,16.0 34.8,17.6 32.5,18.3 31.9,19.3 32.7,21.7 31.4,22.7 29.3,21.5 28.2,21.8 27.0,24.0 25.4,23.8 24.7,21.5 23.7,20.9 21.3,21.7 20.3,20.4 21.5,18.3 21.2,17.2 19.0,16.0 19.2,14.4 21.5,13.7 22.1,12.7 21.3,10.3 22.6,9.3 24.7,10.5 25.8,10.2 27.0,8.0 28.6,8.2 29.3,10.5 30.3,11.1 32.7,10.3 33.7,11.6 32.5,13.7 32.8,14.8" fill="#e8e8e8" stroke="#b4b4b4" stroke-width=".8"/><circle cx="27" cy="16" r="2.4" fill="#f4f4f4" stroke="#b4b4b4" stroke-width=".8"/><circle cx="11" cy="9" r="7" fill="#74bc2c" stroke="#4a8a18"/><path d="M7 9 H15 M11 5 V13" stroke="#fff" stroke-width="2.200"/></svg><span class="t c" style="left:1436px;top:287px;color:#222;letter-spacing:.1px">Copia</span><span class="t c" style="left:1436px;top:302px;color:#222;letter-spacing:.1px">Ferramenta</span><svg style="left:1503px;top:236px;overflow:visible" width="50" height="48" viewBox="0 0 50 48"><path d="M0 31 L18 40 L47.500 26 V32.500 L18 47 L0 38Z" fill="#bd6638" stroke="#8a4420" stroke-width=".7" stroke-linejoin="round"/><path d="M0 31 L29.500 17.500 L47.500 26 L18 40Z" fill="#d68a5c" stroke="#8a4420" stroke-width=".7" stroke-linejoin="round"/><path d="M18 40 V47" stroke="#8a4420" stroke-width=".7"/><path d="M18 40 L47.500 26 V32.500 L18 47Z" fill="#c87448" opacity=".6"/><polygon points="25.5,24.0 25.3,26.0 22.2,27.0 21.5,28.3 22.4,31.4 20.8,32.7 18.0,31.2 16.5,31.6 15.0,34.5 13.0,34.3 12.0,31.2 10.7,30.5 7.6,31.4 6.3,29.8 7.8,27.0 7.4,25.5 4.5,24.0 4.7,22.0 7.8,21.0 8.5,19.7 7.6,16.6 9.2,15.3 12.0,16.8 13.5,16.4 15.0,13.5 17.0,13.7 18.0,16.8 19.3,17.5 22.4,16.6 23.7,18.2 22.2,21.0 22.6,22.5" fill="#c8c8c8" stroke="#888" stroke-width=".8"/><circle cx="15" cy="24" r="3.1" fill="#f4f4f4" stroke="#888" stroke-width=".8"/><path d="M24 31.500 L27 25 L43 9 L47 13 L31 29Z" fill="#f4b030" stroke="#a87018" stroke-width=".8"/><path d="M28 26 L44 10.500" stroke="#fbd880" stroke-width="1.400"/><path d="M43 9 L47 13 L49 10 L46 7Z" fill="#b090d8" stroke="#7a60a8" stroke-width=".6"/><path d="M24 31.500 L25.500 28 L27.500 30Z" fill="#333"/></svg><span class="t c" style="left:1527px;top:287px;color:#222;letter-spacing:.1px">Modifica</span><span class="t c" style="left:1527px;top:302px;color:#222;letter-spacing:.1px">Ferramenta</span><svg style="left:1412px;top:327px;overflow:visible" width="50" height="48" viewBox="0 0 50 48"><path d="M2 10 H22 V4 L34 13 L22 22 V16 H2Z" fill="#7cc430" stroke="#4a8a18" stroke-width=".8"/><path d="M0 31 L18 40 L47.500 26 V32.500 L18 47 L0 38Z" fill="#bd6638" stroke="#8a4420" stroke-width=".7" stroke-linejoin="round"/><path d="M0 31 L29.500 17.500 L47.500 26 L18 40Z" fill="#d68a5c" stroke="#8a4420" stroke-width=".7" stroke-linejoin="round"/><path d="M18 40 V47" stroke="#8a4420" stroke-width=".7"/><path d="M18 40 L47.500 26 V32.500 L18 47Z" fill="#c87448" opacity=".6"/><path d="M-4 33 H12 V28 L22 36 L12 44 V39 H-4Z" fill="#7cc430" stroke="#4a8a18" stroke-width=".8"/><polygon points="19.0,19.0 18.8,21.0 15.8,21.8 15.2,23.1 16.1,26.1 14.6,27.3 11.8,25.8 10.4,26.3 9.0,29.0 7.0,28.8 6.2,25.8 4.9,25.2 1.9,26.1 0.7,24.6 2.2,21.8 1.7,20.4 -1.0,19.0 -0.8,17.0 2.2,16.2 2.8,14.9 1.9,11.9 3.4,10.7 6.2,12.2 7.6,11.7 9.0,9.0 11.0,9.2 11.8,12.2 13.1,12.8 16.1,11.9 17.3,13.4 15.8,16.2 16.3,17.6" fill="#c8c8c8" stroke="#888" stroke-width=".8"/><circle cx="9" cy="19" r="3.0" fill="#f4f4f4" stroke="#888" stroke-width=".8"/><polygon points="38.5,30.0 38.3,32.0 35.2,33.0 34.5,34.3 35.4,37.4 33.8,38.7 31.0,37.2 29.5,37.6 28.0,40.5 26.0,40.3 25.0,37.2 23.7,36.5 20.6,37.4 19.3,35.8 20.8,33.0 20.4,31.5 17.5,30.0 17.7,28.0 20.8,27.0 21.5,25.7 20.6,22.6 22.2,21.3 25.0,22.8 26.5,22.4 28.0,19.5 30.0,19.7 31.0,22.8 32.3,23.5 35.4,22.6 36.7,24.2 35.2,27.0 35.6,28.5" fill="#c8c8c8" stroke="#888" stroke-width=".8"/><circle cx="28" cy="30" r="3.1" fill="#f4f4f4" stroke="#888" stroke-width=".8"/></svg><span class="t c" style="left:1436px;top:378px;color:#222;letter-spacing:.1px">Sostituisci</span><span class="t c" style="left:1436px;top:393px;color:#222;letter-spacing:.1px">Ferramenta</span><svg style="left:1503px;top:327px;overflow:visible" width="50" height="48" viewBox="0 0 50 48"><path d="M0 31 L18 40 L47.500 26 V32.500 L18 47 L0 38Z" fill="#bd6638" stroke="#8a4420" stroke-width=".7" stroke-linejoin="round"/><path d="M0 31 L29.500 17.500 L47.500 26 L18 40Z" fill="#d68a5c" stroke="#8a4420" stroke-width=".7" stroke-linejoin="round"/><path d="M18 40 V47" stroke="#8a4420" stroke-width=".7"/><path d="M18 40 L47.500 26 V32.500 L18 47Z" fill="#c87448" opacity=".6"/><polygon points="25.5,24.0 25.3,26.0 22.2,27.0 21.5,28.3 22.4,31.4 20.8,32.7 18.0,31.2 16.5,31.6 15.0,34.5 13.0,34.3 12.0,31.2 10.7,30.5 7.6,31.4 6.3,29.8 7.8,27.0 7.4,25.5 4.5,24.0 4.7,22.0 7.8,21.0 8.5,19.7 7.6,16.6 9.2,15.3 12.0,16.8 13.5,16.4 15.0,13.5 17.0,13.7 18.0,16.8 19.3,17.5 22.4,16.6 23.7,18.2 22.2,21.0 22.6,22.5" fill="#c8c8c8" stroke="#888" stroke-width=".8"/><circle cx="15" cy="24" r="3.1" fill="#f4f4f4" stroke="#888" stroke-width=".8"/><path d="M22 30 C22 18 38 14 44 23 L47.500 19 V31 H36 L40 27 C36 21 28 24 28 30Z" fill="#5a7ae8" stroke="#2a48b0" stroke-width=".8"/><path d="M46 33 C45 43 32 46 25 39 L21 43 V32 H33 L29 36 C33 40 40 38 40 33Z" fill="#5a7ae8" stroke="#2a48b0" stroke-width=".8"/></svg><span class="t c" style="left:1527px;top:378px;color:#222;letter-spacing:.1px">Aggiorna</span><span class="t c" style="left:1527px;top:393px;color:#222;letter-spacing:.1px">Ferramenta</span><svg style="left:1412px;top:418px;overflow:visible" width="50" height="48" viewBox="0 0 50 48"><path d="M0 31 L18 40 L47.500 26 V32.500 L18 47 L0 38Z" fill="#bd6638" stroke="#8a4420" stroke-width=".7" stroke-linejoin="round"/><path d="M0 31 L29.500 17.500 L47.500 26 L18 40Z" fill="#d68a5c" stroke="#8a4420" stroke-width=".7" stroke-linejoin="round"/><path d="M18 40 V47" stroke="#8a4420" stroke-width=".7"/><path d="M18 40 L47.500 26 V32.500 L18 47Z" fill="#c87448" opacity=".6"/><polygon points="18.0,30.0 17.8,31.8 15.2,32.5 14.5,33.7 15.4,36.4 14.0,37.5 11.5,36.2 10.3,36.5 9.0,39.0 7.2,38.8 6.5,36.2 5.3,35.5 2.6,36.4 1.5,35.0 2.8,32.5 2.5,31.3 0.0,30.0 0.2,28.2 2.8,27.5 3.5,26.3 2.6,23.6 4.0,22.5 6.5,23.8 7.7,23.5 9.0,21.0 10.8,21.2 11.5,23.8 12.7,24.5 15.4,23.6 16.5,25.0 15.2,27.5 15.5,28.7" fill="#c8c8c8" stroke="#888" stroke-width=".8"/><circle cx="9" cy="30" r="2.7" fill="#f4f4f4" stroke="#888" stroke-width=".8"/><path d="M4 15 C13 2 33 2 42 15 C33 28 13 28 4 15Z" fill="#fff" stroke="#c89a10" stroke-width="2.200"/><circle cx="23" cy="15" r="7.500" fill="#5a9ac0" stroke="#2a5a78"/><circle cx="23" cy="15" r="3.400" fill="#123"/><circle cx="21" cy="13" r="1.200" fill="#fff"/></svg><span class="t c" style="left:1436px;top:469px;color:#222;letter-spacing:.1px">Accendi/Spegni</span><span class="t c" style="left:1436px;top:484px;color:#222;letter-spacing:.1px">Ferramenta</span><svg style="left:1503px;top:418px;overflow:visible" width="50" height="48" viewBox="0 0 50 48"><rect x="1" y="2" width="23" height="44" fill="#c0663a" stroke="#8a4420"/><path d="M1 26 H24 M1 35 H24" stroke="#8a4420" stroke-width="1"/><rect x="26" y="2" width="21" height="44" fill="#c0663a" stroke="#8a4420"/><rect x="30" y="7" width="13" height="35" fill="#bfe4ee" stroke="#8a4420" stroke-width=".8"/><path d="M7 17 C15 6 31 6 39 17 C31 28 15 28 7 17Z" fill="#fff" stroke="#c89a10" stroke-width="2.200"/><circle cx="23" cy="17" r="6.500" fill="#5a9ac0" stroke="#2a5a78"/><circle cx="23" cy="17" r="3" fill="#123"/><circle cx="21.500" cy="15.500" r="1.100" fill="#fff"/></svg><span class="t c" style="left:1527px;top:469px;color:#222;letter-spacing:.1px">Accendi/Spegni</span><span class="t c" style="left:1527px;top:484px;color:#222;letter-spacing:.1px">Antine</span><svg style="left:1412px;top:509px;overflow:visible" width="50" height="48" viewBox="0 0 50 48"><path d="M0 31 L18 40 L47.500 26 V32.500 L18 47 L0 38Z" fill="#bd6638" stroke="#8a4420" stroke-width=".7" stroke-linejoin="round"/><path d="M0 31 L29.500 17.500 L47.500 26 L18 40Z" fill="#d68a5c" stroke="#8a4420" stroke-width=".7" stroke-linejoin="round"/><path d="M18 40 V47" stroke="#8a4420" stroke-width=".7"/><path d="M18 40 L47.500 26 V32.500 L18 47Z" fill="#c87448" opacity=".6"/><ellipse cx="19" cy="36" rx="3" ry="1.7" fill="#c47848" stroke="#8a4420" stroke-width=".7"/><path d="M9 0 H29 L27 5 H11Z" fill="#d82828"/><path d="M11 5 H27 L26 17 H12Z" fill="#34343a"/><path d="M11.500 8 H26.500 M12 12 H26" stroke="#c8c8c8" stroke-width="1.400"/><path d="M13 17 H25 L21.500 24 H16.500Z" fill="#55555c"/><path d="M17.800 24 H20.200 L19.600 37 H18.400Z" fill="#c8c8c8" stroke="#777" stroke-width=".5"/></svg><span class="t c" style="left:1436px;top:560px;color:#222;letter-spacing:.1px">Foro Singolo</span><svg style="left:1503px;top:509px;overflow:visible" width="50" height="48" viewBox="0 0 50 48"><path d="M0 31 L18 40 L47.500 26 V32.500 L18 47 L0 38Z" fill="#bd6638" stroke="#8a4420" stroke-width=".7" stroke-linejoin="round"/><path d="M0 31 L29.500 17.500 L47.500 26 L18 40Z" fill="#d68a5c" stroke="#8a4420" stroke-width=".7" stroke-linejoin="round"/><path d="M18 40 V47" stroke="#8a4420" stroke-width=".7"/><path d="M18 40 L47.500 26 V32.500 L18 47Z" fill="#c87448" opacity=".6"/><ellipse cx="10" cy="32" rx="2.6" ry="1.5" fill="#c47848" stroke="#8a4420" stroke-width=".7"/><ellipse cx="19" cy="36" rx="2.6" ry="1.5" fill="#c47848" stroke="#8a4420" stroke-width=".7"/><ellipse cx="30" cy="23" rx="2.6" ry="1.5" fill="#c47848" stroke="#8a4420" stroke-width=".7"/><ellipse cx="38" cy="27" rx="2.6" ry="1.5" fill="#c47848" stroke="#8a4420" stroke-width=".7"/><path d="M9 0 H29 L27 5 H11Z" fill="#d82828"/><path d="M11 5 H27 L26 17 H12Z" fill="#34343a"/><path d="M11.500 8 H26.500 M12 12 H26" stroke="#c8c8c8" stroke-width="1.400"/><path d="M13 17 H25 L21.500 24 H16.500Z" fill="#55555c"/><path d="M17.800 24 H20.200 L19.600 37 H18.400Z" fill="#c8c8c8" stroke="#777" stroke-width=".5"/></svg><span class="t c" style="left:1527px;top:560px;color:#222;letter-spacing:.1px">Fori Multipli</span><svg style="left:1412px;top:600px;overflow:visible" width="50" height="48" viewBox="0 0 50 48"><g transform="translate(4,34) rotate(-12)"><path d="M-14 -11 H6 L10 -7 V7 L6 11 H-14Z" fill="#d82828"/><path d="M8 -8 H22 L24 -5 V5 L22 8 H8Z" fill="#34343a"/><path d="M12 -8 V8 M17 -8 V8" stroke="#c8c8c8" stroke-width="1.400"/><path d="M24 -4 L31 -2 V2 L24 4Z" fill="#888"/><path d="M31 -1 H44 V1 H31Z" fill="#bbb" stroke="#888" stroke-width=".4"/></g><ellipse cx="18" cy="44" rx="22" ry="2.500" fill="#eee"/></svg><span class="t c" style="left:1439px;top:651px;color:#222;letter-spacing:.1px">Copia Forature</span><svg style="left:1503px;top:600px;overflow:visible" width="50" height="48" viewBox="0 0 50 48"><path d="M8 12 C8 7 12 5 17 5 H28 L36 9 V15 L28 18 H24 L26 38 C22 41 14 41 10 38Z" fill="#cdcdcd" stroke="#9a9a9a" stroke-width=".8"/><path d="M14 8 C12 14 13 30 14 38" stroke="#f4f4f4" stroke-width="3" fill="none"/><path d="M28 6 L36 9 V15 L28 18Z" fill="#b4b4b4"/><path d="M36 10 H41 V14 H36Z" fill="#e0e0e0" stroke="#aaa" stroke-width=".5"/><path d="M23 24 L28 19 L35 26 L42 19 L47 24 L40 31 L47 38 L42 43 L35 36 L28 43 L23 38 L30 31Z" fill="#ec4a38" stroke="#b82818" stroke-width=".8"/></svg><span class="t c" style="left:1527px;top:651px;color:#222;letter-spacing:.1px">Rimuovi</span><span class="t c" style="left:1527px;top:666px;color:#222;letter-spacing:.1px">Forature</span><svg style="left:1412px;top:691px;overflow:visible" width="50" height="48" viewBox="0 0 50 48"><path d="M0 31 L18 40 L47.500 26 V32.500 L18 47 L3 40 C1 39 0 37 0 35Z" fill="#bd6638" stroke="#8a4420" stroke-width=".7"/><path d="M0 31 L29.500 17.500 L47.500 26 L18 40Z" fill="#d68a5c" stroke="#8a4420" stroke-width=".7"/><path d="M5 33.500 L34 20" stroke="#a85428" stroke-width="1"/><path d="M18 40 V47" stroke="#8a4420" stroke-width=".7"/><path d="M12 0 H34 L32 5 H14Z" fill="#d82828"/><path d="M14 5 H32 L31 17 H15Z" fill="#34343a"/><path d="M14.500 8 H31.500 M15 12 H31" stroke="#c8c8c8" stroke-width="1.400"/><path d="M17 17 H29 L31 36 C30 39 27 39 26 36 L20 22Z" fill="#e8e8e8" stroke="#888" stroke-width=".7"/></svg><span class="t c" style="left:1436px;top:742px;color:#222;letter-spacing:.1px">Crea</span><span class="t c" style="left:1436px;top:757px;color:#222;letter-spacing:.1px">Sagomatura</span><svg style="left:1503px;top:691px;overflow:visible" width="50" height="48" viewBox="0 0 50 48"><path d="M0 31 L18 40 L47.500 26 V32.500 L18 47 L0 38Z" fill="#bd6638" stroke="#8a4420" stroke-width=".7" stroke-linejoin="round"/><path d="M0 31 L29.500 17.500 L47.500 26 L18 40Z" fill="#d68a5c" stroke="#8a4420" stroke-width=".7" stroke-linejoin="round"/><path d="M18 40 V47" stroke="#8a4420" stroke-width=".7"/><path d="M18 40 L47.500 26 V32.500 L18 47Z" fill="#c87448" opacity=".6"/><path d="M10 36 L39.500 22 L43 23.700 L13.500 37.700Z" fill="#a85428"/><path d="M11.500 37 V43.500 L14.500 45 V38.300" fill="#8a4420"/><polygon points="46.0,13.0 45.8,15.1 42.5,16.1 41.8,17.5 42.8,20.8 41.1,22.1 38.1,20.5 36.6,21.0 35.0,24.0 32.9,23.8 31.9,20.5 30.5,19.8 27.2,20.8 25.9,19.1 27.5,16.1 27.0,14.6 24.0,13.0 24.2,10.9 27.5,9.9 28.2,8.5 27.2,5.2 28.9,3.9 31.9,5.5 33.4,5.0 35.0,2.0 37.1,2.2 38.1,5.5 39.5,6.2 42.8,5.2 44.1,6.9 42.5,9.9 43.0,11.4" fill="#c8c8c8" stroke="#888" stroke-width=".8"/><circle cx="35" cy="13" r="3.3" fill="#f4f4f4" stroke="#888" stroke-width=".8"/></svg><span class="t c" style="left:1527px;top:742px;color:#222;letter-spacing:.1px">Crea Scavo</span><svg style="left:1412px;top:782px;overflow:visible" width="50" height="48" viewBox="0 0 50 48"><path d="M0 31 L18 40 L47.500 26 V32.500 L18 47 L0 38Z" fill="#bd6638" stroke="#8a4420" stroke-width=".7" stroke-linejoin="round"/><path d="M0 31 L29.500 17.500 L47.500 26 L18 40Z" fill="#d68a5c" stroke="#8a4420" stroke-width=".7" stroke-linejoin="round"/><path d="M18 40 V47" stroke="#8a4420" stroke-width=".7"/><path d="M18 40 L47.500 26 V32.500 L18 47Z" fill="#c87448" opacity=".6"/><path d="M5 33.500 L34.500 19.800 M9 35.500 L38.500 21.800 M13.500 37.700 L43 23.900" stroke="#8a4420" stroke-width="1.300"/><polygon points="32.0,15.0 31.8,17.1 28.5,18.1 27.8,19.5 28.8,22.8 27.1,24.1 24.1,22.5 22.6,23.0 21.0,26.0 18.9,25.8 17.9,22.5 16.5,21.8 13.2,22.8 11.9,21.1 13.5,18.1 13.0,16.6 10.0,15.0 10.2,12.9 13.5,11.9 14.2,10.5 13.2,7.2 14.9,5.9 17.9,7.5 19.4,7.0 21.0,4.0 23.1,4.2 24.1,7.5 25.5,8.2 28.8,7.2 30.1,8.9 28.5,11.9 29.0,13.4" fill="#d4d4d4" stroke="#999" stroke-width=".8"/><circle cx="21" cy="15" r="3.3" fill="#f4f4f4" stroke="#999" stroke-width=".8"/><polygon points="26.0,17.0 25.8,19.1 22.5,20.1 21.8,21.5 22.8,24.8 21.1,26.1 18.1,24.5 16.6,25.0 15.0,28.0 12.9,27.8 11.9,24.5 10.5,23.8 7.2,24.8 5.9,23.1 7.5,20.1 7.0,18.6 4.0,17.0 4.2,14.9 7.5,13.9 8.2,12.5 7.2,9.2 8.9,7.9 11.9,9.5 13.4,9.0 15.0,6.0 17.1,6.2 18.1,9.5 19.5,10.2 22.8,9.2 24.1,10.9 22.5,13.9 23.0,15.4" fill="#c8c8c8" stroke="#888" stroke-width=".8"/><circle cx="15" cy="17" r="3.3" fill="#f4f4f4" stroke="#888" stroke-width=".8"/></svg><span class="t c" style="left:1436px;top:833px;color:#222;letter-spacing:.1px">Scavo Multiplo</span><svg style="left:1503px;top:782px;overflow:visible" width="50" height="48" viewBox="0 0 50 48"><path d="M6 8 L13 1 H43 V38 L36 46 H6Z" fill="#28b8c0" stroke="#0a6a78" stroke-width="1"/><path d="M36 8 L43 1 V38 L36 46Z" fill="#1a98a0" stroke="#0a6a78" stroke-width=".8"/><rect x="6" y="8" width="30" height="38" fill="#38c8d0" stroke="#0a6a78"/><rect x="9" y="11" width="24" height="9" fill="#8ae0e8" stroke="#0a6a78" stroke-width=".7"/><rect x="9" y="23" width="24" height="9" fill="#8ae0e8" stroke="#0a6a78" stroke-width=".7"/><rect x="9" y="35" width="24" height="9" fill="#8ae0e8" stroke="#0a6a78" stroke-width=".7"/><path d="M21 43 L39 24" stroke="#555" stroke-width="4.500" stroke-linecap="round"/><path d="M21.500 42.500 L38.500 24.500" stroke="#f0f0f0" stroke-width="2.200" stroke-linecap="round"/><path d="M41 13 l2 6 l6 -2 l-4 5 l4 4 l-6 -1 l-2 6 l-2 -6 l-6 1 l4 -4 l-4 -5 l6 2Z" fill="#f8b820"/></svg><span class="t c" style="left:1527px;top:833px;color:#222;letter-spacing:.1px">Crea Cabinet</span><div style="left:1387px;top:852px;width:75px;height:22px;background:#fcfcfc;border:1px solid #c4c4c4;border-top:none"></div><span class="t" style="left:1392.5px;top:855px;color:#444;letter-spacing:-.3px">Oikema Eng</span><span class="t" style="left:1469px;top:856px;color:#444">Colors</span><span class="t" style="left:1516px;top:856px;color:#444">ICM Mech</span><svg style="left:1583px;top:860px;" width="9" height="9" viewBox="0 0 9 9"><rect x="0" y="0" width="9" height="1.800" fill="#666"/><path d="M0 4 H9 L4.500 8.500Z" fill="#666"/></svg>
<div style="left:0px;top:876px;width:1600px;height:24px;background:#fcfcfc;border-top:1px solid #cfcfcf"></div><div style="left:0px;top:898px;width:1600px;height:2px;background:#c9ccd2"></div><span class="t" style="left:5.5px;top:880px;color:#333;letter-spacing:-.2px">Per Aiuto, premere F1</span><span class="t" style="left:764px;top:880px;color:#333;letter-spacing:-.2px">Dimensioni vista 1171 x&nbsp; 692</span><svg style="left:925px;top:879px;" width="13" height="17" viewBox="0 0 13 17"><rect x="5" y=".5" width="7" height="16" fill="#f4c848" stroke="#c89a20" stroke-width=".8"/><path d="M5 4 H9 M5 7.500 H8 M5 11 H9 M5 14 H8" stroke="#a87a10" stroke-width=".9"/><rect x=".5" y="3" width="3" height="3" fill="none" stroke="#c89a20" stroke-width=".9"/></svg><span class="t" style="left:943px;top:880px;color:#111;letter-spacing:-.1px;-webkit-text-stroke:.3px #111">Unità</span><span class="t" style="left:983px;top:880px;color:#333">mm; deg</span><svg style="left:1045.0px;top:880.0px;" width="16" height="16" viewBox="0 0 16 16"><circle cx="6.500" cy="6.500" r="5" fill="#f4f4f4" stroke="#666" stroke-width="1.200"/><path d="M10 10 L15 15" stroke="#444" stroke-width="2"/><rect x="4" y="4" width="5" height="5" fill="none" stroke="#888" stroke-width=".8"/></svg><svg style="left:1068.0px;top:880.0px;" width="16" height="16" viewBox="0 0 16 16"><circle cx="8" cy="3" r="2" fill="none" stroke="#555"/><path d="M4 8 H12 L10 11 H13 L8 15.500 L3 11 H6Z" fill="#fafafa" stroke="#555" stroke-width=".9"/></svg><svg style="left:1091px;top:886px;" width="6" height="4" viewBox="0 0 6 4"><path d="M0 0 H6 L3 3.500Z" fill="#333"/></svg><svg style="left:1103.0px;top:880.0px;" width="16" height="16" viewBox="0 0 16 16"><path d="M1 5 L4 2 H12 V11 L9 14 H1Z" fill="#f8d030" stroke="#a88410" stroke-width=".9"/><path d="M1 5 H9 V14 M9 5 L12 2" fill="none" stroke="#a88410" stroke-width=".9"/><path d="M10 8 H14 M12 6 L15 8 L12 10" stroke="#333" stroke-width="1.200" fill="none"/></svg><svg style="left:1126px;top:886px;" width="6" height="4" viewBox="0 0 6 4"><path d="M0 0 H6 L3 3.500Z" fill="#333"/></svg><svg style="left:1138.0px;top:880.0px;" width="16" height="16" viewBox="0 0 16 16"><path d="M1 5 L5 1 H15 V11 L11 15 H1Z" fill="#4a90d8" stroke="#1a4a88" stroke-width=".9"/><path d="M1 5 H11 V15 M11 5 L15 1" fill="none" stroke="#1a4a88" stroke-width=".9"/><path d="M1 5 L5 1 H15 L11 5Z" fill="#9ac4ee"/></svg><svg style="left:1161px;top:886px;" width="6" height="4" viewBox="0 0 6 4"><path d="M0 0 H6 L3 3.500Z" fill="#333"/></svg><svg style="left:1174.0px;top:880.0px;" width="16" height="16" viewBox="0 0 16 16"><circle cx="6" cy="3" r="1.800" fill="#2a6a9a"/><path d="M2 7 H8 L11 9 M6 7 V12" stroke="#2a6a9a" stroke-width="1.500" fill="none"/><rect x="7" y="9" width="7" height="6" fill="#444"/><circle cx="1" cy="8" r=".8" fill="#2a6a9a"/></svg><svg style="left:1196px;top:886px;" width="6" height="4" viewBox="0 0 6 4"><path d="M0 0 H6 L3 3.500Z" fill="#333"/></svg><div style="left:1205px;top:878px;width:24px;height:21px;background:#cfcfcf"></div><svg style="left:1209.0px;top:880.0px;" width="16" height="16" viewBox="0 0 16 16"><path d="M1 7 L6 3 H15 L13 11 L8 15 H1Z" fill="#5a98d8" stroke="#1a4a88" stroke-width=".9"/><path d="M1 7 H10 L15 3 M10 7 L8 15" fill="none" stroke="#1a4a88" stroke-width=".9"/></svg><svg style="left:1232.0px;top:880.0px;" width="16" height="16" viewBox="0 0 16 16"><circle cx="4" cy="10" r="3" fill="none" stroke="#5a8a8a" stroke-width="1.100"/><circle cx="11" cy="10" r="3" fill="none" stroke="#5a8a8a" stroke-width="1.100"/><path d="M7 10 H8 M1 8 L3 3 M14 8 L15 2" stroke="#5a8a8a" stroke-width="1"/></svg><svg style="left:1251px;top:886px;" width="6" height="4" viewBox="0 0 6 4"><path d="M0 0 H6 L3 3.500Z" fill="#333"/></svg><svg style="left:1264.0px;top:880.0px;" width="16" height="16" viewBox="0 0 16 16"><path d="M1 5 L5 1 H15 V11 L11 15 H1Z" fill="#4a90d8" stroke="#1a4a88" stroke-width=".9"/><path d="M1 5 H11 V15 M11 5 L15 1" fill="none" stroke="#1a4a88" stroke-width=".9"/><path d="M1 5 L5 1 H15 L11 5Z" fill="#9ac4ee"/></svg><svg style="left:1283px;top:886px;" width="6" height="4" viewBox="0 0 6 4"><path d="M0 0 H6 L3 3.500Z" fill="#333"/></svg><svg style="left:1297.0px;top:880.0px;" width="16" height="16" viewBox="0 0 16 16"><path d="M1 9 L4 6 H10 V3 L12 1 H15 V11 L11 15 H1Z" fill="#5a7ab8" stroke="#1a2a58" stroke-width=".9"/><path d="M1 9 H11 V15 M11 9 L15 5" fill="none" stroke="#1a2a58" stroke-width=".9"/></svg><svg style="left:1315px;top:886px;" width="6" height="4" viewBox="0 0 6 4"><path d="M0 0 H6 L3 3.500Z" fill="#333"/></svg><svg style="left:1330.0px;top:880.0px;" width="16" height="16" viewBox="0 0 16 16"><path d="M2 8 L7 3.500 V6.500 C12 6.500 13 9 13 12 C12 10 10 9.500 7 9.500 V12.500Z" fill="#c4c4c4"/><path d="M11 9 L11 15 L13 13.500 L14.500 16" stroke="#bbb" stroke-width=".9" fill="none"/></svg><div style="left:1350px;top:878px;width:24px;height:21px;background:#cfcfcf"></div><svg style="left:1353.0px;top:880.0px;" width="16" height="16" viewBox="0 0 16 16"><path d="M4 1 V13 L7 10 L9.500 15 L11.500 14 L9 9.500 H13Z" fill="#fff" stroke="#222" stroke-width="1"/></svg><svg style="left:1380.0px;top:880.0px;" width="16" height="16" viewBox="0 0 16 16"><path d="M5 2 V12 L7.500 9.500 L9.500 14 L11 13 L9 9 H12Z" fill="#fff" stroke="#bbb" stroke-width=".9"/></svg><div style="left:1398px;top:878px;width:89px;height:21px;background:#fff;border:1px solid #d4d4d4"></div><span class="t" style="left:1401px;top:880px;color:#111;font-size:12.500px;letter-spacing:-.1px">Drilldown: Pa</span><svg style="left:1478px;top:887px;" width="6" height="4" viewBox="0 0 6 4"><path d="M0 0 H6 L3 3.500Z" fill="#666"/></svg><div style="left:1487px;top:878px;width:66px;height:21px;background:#fff;border:1px solid #d4d4d4"></div><span class="t" style="left:1490px;top:880px;color:#111;font-size:12.500px;letter-spacing:-.1px">Default</span><svg style="left:1543px;top:887px;" width="6" height="4" viewBox="0 0 6 4"><path d="M0 0 H6 L3 3.500Z" fill="#666"/></svg><svg style="left:1557.0px;top:880.0px;" width="16" height="16" viewBox="0 0 16 16"><rect x="5" y="1" width="6" height="5" fill="#d02060"/><rect x="1" y="10" width="5" height="5" fill="#6ab0e8" stroke="#358" stroke-width=".6"/><rect x="10" y="10" width="5" height="5" fill="#f0e068" stroke="#886" stroke-width=".6"/><path d="M8 6 V8 M3.500 10 V8 H12.500 V10" stroke="#444" stroke-width=".9" fill="none"/></svg><svg style="left:1582px;top:886px;" width="10" height="10" viewBox="0 0 10 10"><g fill="#bbb"><rect x="7" y="1" width="2" height="2"/><rect x="4" y="4" width="2" height="2"/><rect x="7" y="4" width="2" height="2"/><rect x="1" y="7" width="2" height="2"/><rect x="4" y="7" width="2" height="2"/><rect x="7" y="7" width="2" height="2"/></g></svg>
<div style="left:0px;top:65px;width:3px;height:835px;background:#dcdcdc"></div><div style="left:0px;top:65px;width:1px;height:835px;background:#8a8a8a"></div><div style="left:1597px;top:65px;width:3px;height:835px;background:#dcdcdc"></div><div style="left:1599px;top:65px;width:1px;height:835px;background:#8a8a8a"></div><div style="left:0px;top:899px;width:1600px;height:1px;background:#8a8a8a"></div>
<div style="left:957px;top:152px;width:469px;height:550px;background:#f0f0f0;border:1px solid #4a4a4a;box-shadow:0 3px 14px rgba(0,0,0,.28);overflow:hidden"></div><div style="left:957px;top:152px;width:469px;height:550px;"><div style="left:0px;top:0px;width:469px;height:31px;background:#454545"></div><div style="left:1px;top:31px;width:467px;height:518px;border:1px solid #fbfbfb;border-bottom:none"></div><svg style="left:7px;top:7px;" width="17" height="17" viewBox="0 0 17 17"><defs><radialGradient id="gl" cx=".4" cy=".35" r=".7"><stop offset="0" stop-color="#9ad0ff"/><stop offset=".6" stop-color="#2a6ad0"/><stop offset="1" stop-color="#123a88"/></radialGradient></defs><circle cx="8.500" cy="8.500" r="8" fill="url(#gl)"/><path d="M8.500 .5 C4 5 4 12 8.500 16.500 M8.500 .5 C13 5 13 12 8.500 16.500 M8.500 .5 V16.500 M1 6 C6 3 11 3 16 6" stroke="#d8ecff" stroke-width=".7" fill="none" opacity=".8"/></svg><span class="t" style="left:30px;top:8px;color:#fff;letter-spacing:.05px">Oikema Engineering - Antine</span><svg style="left:447px;top:9px;" width="13" height="13" viewBox="0 0 13 13"><path d="M1 1 L12 12 M12 1 L1 12" stroke="#fff" stroke-width="1.300"/></svg><svg style="left:3px;top:33px;" width="262" height="290" viewBox="0 0 262 290"><defs><linearGradient id="cone" x1="0" x2="0" y1="0" y2="1"><stop offset="0" stop-color="#fbf8e8" stop-opacity=".1"/><stop offset="1" stop-color="#f6f3e0" stop-opacity=".7"/></linearGradient><clipPath id="cc"><circle cx="189" cy="200.500" r="60"/></clipPath></defs><polygon points="70.7,34.4 231,76.7 183,102 27.5,59.8" fill="#e3deb2" stroke="#111" stroke-width="1.4" stroke-linejoin="round"/><polyline points="76,37.5 33,62.5" fill="none" stroke="#111" stroke-width="1.2" /><polyline points="225,74 179,99.5" fill="none" stroke="#111" stroke-width="1.2" /><polygon points="183,102 231,76.7 231,215 183,241" fill="#8a8458" stroke="#111" stroke-width="1.4" stroke-linejoin="round"/><polygon points="27.5,59.8 183,102 183,241 27.5,200" fill="#d8d29a" stroke="#111" stroke-width="1.4" stroke-linejoin="round"/><polygon points="24.7,66 60,75.5 60,206.5 24.7,196.7" fill="#a89a40" stroke="#111" stroke-width="1.4" stroke-linejoin="round"/><polygon points="64,76.5 100,86.5 100,217.5 64,207.5" fill="#a89a40" stroke="#111" stroke-width="1.4" stroke-linejoin="round"/><polygon points="104,87.5 138,97 138,228 104,218.5" fill="#a89a40" stroke="#111" stroke-width="1.4" stroke-linejoin="round"/><polygon points="142,98 180,108.5 180,239.5 142,229" fill="#a89a40" stroke="#111" stroke-width="1.4" stroke-linejoin="round"/><polygon points="24.7,66 29,63.5 64,73 60,75.5" fill="#d8d29a" stroke="#111" stroke-width="1" stroke-linejoin="round"/><polygon points="64,76.5 68,74 104,84 100,86.5" fill="#d8d29a" stroke="#111" stroke-width="1" stroke-linejoin="round"/><polygon points="104,87.5 108,85 142,94.5 138,97" fill="#d8d29a" stroke="#111" stroke-width="1" stroke-linejoin="round"/><polygon points="142,98 146,95.5 183,105.5 180,108.5" fill="#d8d29a" stroke="#111" stroke-width="1" stroke-linejoin="round"/><clipPath id="bx"><polygon points="70.7,34.4 231,76.7 231,215 183,241 24.7,200 24.7,60"/></clipPath><polygon points="173,87 201,91 247,180 132,180" fill="url(#cone)" clip-path="url(#bx)"/><circle cx="184" cy="105" r="19" fill="#fffbe6" fill-opacity=".35" stroke="#666" stroke-width=".6"/><polyline points="179,109 179,145" fill="none" stroke="#999" stroke-width="1" /><polyline points="186,107 186,145" fill="none" stroke="#999" stroke-width="1" /><g clip-path="url(#cc)"><rect x="127" y="138.39999999999998" width="124" height="124" fill="#e3deb2"/><polygon points="183,187 255,150 255,275 183,275" fill="#8a8458" stroke="#111" stroke-width="2.2" stroke-linejoin="round"/><polygon points="125,175 176,190 176,275 125,275" fill="#e3deb2" stroke="#111" stroke-width="1" stroke-linejoin="round"/><polygon points="120,191 171,203 171,275 120,275" fill="#a89a40" stroke="#111" stroke-width="2.4" stroke-linejoin="round"/><polygon points="171,203 178,198 178,275 171,275" fill="#8a8458" stroke="#111" stroke-width="2" stroke-linejoin="round"/><polygon points="120,191 130,183 178,196 171,203" fill="#d8d29a" stroke="#111" stroke-width="2.2" stroke-linejoin="round"/><polygon points="125,181 133,175 176,187 176,194" fill="#d8d29a" stroke="#111" stroke-width="2" stroke-linejoin="round"/><polygon points="176,194 185,189 185,275 176,275" fill="#d8d29a" stroke="#111" stroke-width="2" stroke-linejoin="round"/><polygon points="173,186 235,155 241,161 185,191 176,194" fill="#d8d29a" stroke="#111" stroke-width="2.2" stroke-linejoin="round"/><polyline points="134,176 173,186 236,154" fill="none" stroke="#111" stroke-width="2.4" /></g><circle cx="189" cy="200.39999999999998" r="60" fill="none" stroke="#333" stroke-width="2.400" stroke-dasharray="5 3.500"/><polyline points="133,77 139,79 137,73" fill="none" stroke="#555" stroke-width="0.8" /><polyline points="150,82 144,80 147,74" fill="none" stroke="#555" stroke-width="0.8" /><polyline points="138,79 140,100" fill="none" stroke="#888" stroke-width="1" /><polyline points="145,80 142,100" fill="none" stroke="#888" stroke-width="1" /><polyline points="190,194 212,198 216,193" fill="none" stroke="#666" stroke-width="0.8" /><polyline points="180,198 200,203 198,208" fill="none" stroke="#666" stroke-width="0.8" /></svg><span class="d" style="left:41px;top:91.8px;font-size:18px;line-height:18px;color:#111;-webkit-text-stroke:.55px #111;text-shadow:-1.6px -1.6px 0 #fff,-1.6px 0px 0 #fff,-1.6px 1.6px 0 #fff,0px -1.6px 0 #fff,0px 1.6px 0 #fff,1.6px -1.6px 0 #fff,1.6px 0px 0 #fff,1.6px 1.6px 0 #fff,0 0 2px #fff,0 0 3px #fff;transform:scaleX(0.85);transform-origin:0 50%">D3</span><span class="d" style="left:117px;top:89.8px;font-size:18px;line-height:18px;color:#111;-webkit-text-stroke:.55px #111;text-shadow:-1.6px -1.6px 0 #fff,-1.6px 0px 0 #fff,-1.6px 1.6px 0 #fff,0px -1.6px 0 #fff,0px 1.6px 0 #fff,1.6px -1.6px 0 #fff,1.6px 0px 0 #fff,1.6px 1.6px 0 #fff,0 0 2px #fff,0 0 3px #fff;transform:scaleX(0.85);transform-origin:0 50%">Dd</span><span class="d" style="left:19px;top:158.8px;font-size:18px;line-height:18px;color:#111;-webkit-text-stroke:.55px #111;text-shadow:-1.6px -1.6px 0 #fff,-1.6px 0px 0 #fff,-1.6px 1.6px 0 #fff,0px -1.6px 0 #fff,0px 1.6px 0 #fff,1.6px -1.6px 0 #fff,1.6px 0px 0 #fff,1.6px 1.6px 0 #fff,0 0 2px #fff,0 0 3px #fff;transform:scaleX(0.85);transform-origin:0 50%">D2</span><span class="d" style="left:56px;top:167.8px;font-size:18px;line-height:18px;color:#111;-webkit-text-stroke:.55px #111;text-shadow:-1.6px -1.6px 0 #fff,-1.6px 0px 0 #fff,-1.6px 1.6px 0 #fff,0px -1.6px 0 #fff,0px 1.6px 0 #fff,1.6px -1.6px 0 #fff,1.6px 0px 0 #fff,1.6px 1.6px 0 #fff,0 0 2px #fff,0 0 3px #fff;transform:scaleX(0.85);transform-origin:0 50%">D4</span><span class="d" style="left:36px;top:224.8px;font-size:18px;line-height:18px;color:#111;-webkit-text-stroke:.55px #111;text-shadow:-1.6px -1.6px 0 #fff,-1.6px 0px 0 #fff,-1.6px 1.6px 0 #fff,0px -1.6px 0 #fff,0px 1.6px 0 #fff,1.6px -1.6px 0 #fff,1.6px 0px 0 #fff,1.6px 1.6px 0 #fff,0 0 2px #fff,0 0 3px #fff;transform:scaleX(0.85);transform-origin:0 50%">D1</span><span class="d" style="left:197px;top:244.8px;font-size:18px;line-height:18px;color:#111;-webkit-text-stroke:.55px #111;text-shadow:-1.6px -1.6px 0 #fff,-1.6px 0px 0 #fff,-1.6px 1.6px 0 #fff,0px -1.6px 0 #fff,0px 1.6px 0 #fff,1.6px -1.6px 0 #fff,1.6px 0px 0 #fff,1.6px 1.6px 0 #fff,0 0 2px #fff,0 0 3px #fff;transform:scaleX(0.885);transform-origin:0 50%">Dc</span><svg style="left:323px;top:38px;" width="32" height="32" viewBox="0 0 32 32"><defs><radialGradient id="gb" cx=".5" cy=".35" r=".75"><stop offset="0" stop-color="#aee4fa"/><stop offset="1" stop-color="#58b4e0"/></radialGradient></defs><circle cx="16" cy="16" r="14.500" fill="url(#gb)" stroke="#3a98c8" stroke-width="1.500"/><rect x="13" y="13.500" width="6" height="6" fill="#fff"/></svg><svg style="left:363px;top:38px;" width="32" height="32" viewBox="0 0 32 32"><defs><radialGradient id="gg" cx=".5" cy=".35" r=".75"><stop offset="0" stop-color="#b0dc38"/><stop offset="1" stop-color="#78b418"/></radialGradient></defs><circle cx="16" cy="16" r="14.500" fill="url(#gg)" stroke="#5a9010" stroke-width="1.500"/><path d="M8.500 16.500 L14 22 L24 11" stroke="#fff" stroke-width="4" fill="none"/></svg><svg style="left:404px;top:38px;" width="32" height="32" viewBox="0 0 32 32"><defs><radialGradient id="gr" cx=".5" cy=".35" r=".75"><stop offset="0" stop-color="#f87058"/><stop offset="1" stop-color="#e03828"/></radialGradient></defs><path d="M10 1.500 H22 L30.500 10 V22 L22 30.500 H10 L1.500 22 V10Z" fill="url(#gr)" stroke="#c83020" stroke-width="1.500"/><path d="M10 10 L22 22 M22 10 L10 22" stroke="#fff" stroke-width="4.500"/></svg><svg style="left:446px;top:38px;" width="16" height="16" viewBox="0 0 16 16"><circle cx="8" cy="8" r="7.300" fill="#2878e0" stroke="#1050b0" stroke-width="1"/><circle cx="8" cy="4.300" r="1.400" fill="#fff"/><rect x="6.800" y="6.500" width="2.400" height="6" fill="#fff"/></svg><div style="left:273px;top:81px;width:194px;height:264px;border:1px solid #dcdcdc"></div><span class="d" style="left:281px;top:74px;background:#f0f0f0;padding:0 1px;letter-spacing:-.4px">Parametri</span><span class="d" style="left:281px;top:93px;">Tipo</span><div style="left:311px;top:90px;width:83px;height:21px;background:#e1e1e1;border:1px solid #adadad"></div><span class="d" style="left:315px;top:93.5px;letter-spacing:-.25px">Pannello</span><svg style="left:379px;top:98.0px;" width="10" height="6" viewBox="0 0 10 6"><path d="M1 1 L5 5 L9 1" stroke="#333" stroke-width="1.100" fill="none"/></svg><div style="left:398px;top:90px;width:62px;height:21px;background:#e1e1e1;border:1px solid #adadad"></div><span class="d" style="left:402px;top:93.5px;letter-spacing:-.25px">YMax</span><svg style="left:445px;top:98.0px;" width="10" height="6" viewBox="0 0 10 6"><path d="M1 1 L5 5 L9 1" stroke="#333" stroke-width="1.100" fill="none"/></svg><span class="d" style="left:281px;top:117px;">Numero Antine</span><div style="left:398px;top:115px;width:59px;height:20px;background:#fff;border:1px solid #7a7a7a"></div><span class="d" style="left:402px;top:118.0px;color:#000">2</span><div style="left:441px;top:117px;width:14px;height:16px;background:#f0f0f0;border:1px solid #d0d0d0"></div><svg style="left:445px;top:119px;" width="6" height="12" viewBox="0 0 6 12"><path d="M0 4 L3 .5 L6 4Z M0 8 L3 11.500 L6 8Z" fill="#222"/></svg><div style="left:442px;top:124.5px;width:12px;height:1px;background:#d0d0d0"></div><span class="d" style="left:281px;top:140px;letter-spacing:.1px">Distanza Antine&nbsp;&nbsp;&nbsp;(Dd)</span><div style="left:398px;top:137px;width:59px;height:20px;background:#fff;border:1px solid #7a7a7a"></div><span class="d" style="left:402px;top:140.0px;color:#000">2</span><span class="d" style="left:281px;top:163px;letter-spacing:.1px">Distanza Cabinet (Dc)</span><div style="left:398px;top:160px;width:59px;height:20px;background:#fff;border:1px solid #7a7a7a"></div><span class="d" style="left:402px;top:163.0px;color:#000">0</span><span class="d" style="left:281px;top:186px;letter-spacing:.05px">Distanza Laterale (Dx)</span><div style="left:398px;top:183px;width:59px;height:20px;background:#fff;border:1px solid #7a7a7a"></div><span class="d" style="left:402px;top:186.0px;color:#000">0</span><span class="d" style="left:282px;top:209px;letter-spacing:.1px">Opposite Direction</span><div style="left:398px;top:209px;width:13px;height:13px;background:#fff;border:1px solid #333"></div><div style="left:273px;top:248px;width:194px;height:94px;background:#f2f2f2;border:1px solid #fff;border-right-color:#d8d8d8;border-bottom-color:#c8c8c8"></div><div style="left:277px;top:229px;width:40px;height:20px;background:#f2f2f2;border:1px solid #fff;border-bottom:none;border-right:1px solid #444"></div><span class="d" style="left:286px;top:232px;">Dim.</span><span class="d" style="left:324px;top:232px;">Dim. Ante</span><span class="d" style="left:285px;top:265px;">Altezza</span><div style="left:347px;top:262px;width:59px;height:20px;background:#f0f0f0;border:1px solid #c4c4c4"></div><span class="d" style="left:351px;top:265.0px;color:#6d6d6d">976</span><div style="left:426px;top:264px;width:13px;height:13px;background:#fff;border:1px solid #333"></div><span class="d" style="left:285px;top:288px;">Larghezza</span><div style="left:347px;top:284px;width:59px;height:20px;background:#f0f0f0;border:1px solid #c4c4c4"></div><span class="d" style="left:351px;top:287.0px;color:#6d6d6d">406,5</span><div style="left:426px;top:287px;width:13px;height:13px;background:#fff;border:1px solid #333"></div><div style="left:273px;top:352px;width:194px;height:83px;border:1px solid #dcdcdc"></div><span class="d" style="left:281px;top:345px;background:#f0f0f0;padding:0 1px;letter-spacing:-.4px">Posizionamento</span><div style="left:279px;top:361px;width:180px;height:21px;background:#e1e1e1;border:1px solid #adadad"></div><span class="d" style="left:283px;top:364.5px;letter-spacing:-.25px">Esterno</span><svg style="left:444px;top:369.0px;" width="10" height="6" viewBox="0 0 10 6"><path d="M1 1 L5 5 L9 1" stroke="#333" stroke-width="1.100" fill="none"/></svg><div style="left:279px;top:384px;width:179px;height:21px;background:#e1e1e1;border:1px solid #adadad"></div><span class="d" style="left:283px;top:387.5px;letter-spacing:-.25px">Verticale</span><svg style="left:443px;top:392.0px;" width="10" height="6" viewBox="0 0 10 6"><path d="M1 1 L5 5 L9 1" stroke="#333" stroke-width="1.100" fill="none"/></svg><div style="left:279px;top:413px;width:13px;height:13px;background:#fff;border:1px solid #333"></div><span class="d" style="left:296px;top:412px;letter-spacing:.2px">Crea Divisioni Verticali</span><div style="left:273px;top:442px;width:194px;height:105px;border:1px solid #dcdcdc"></div><span class="d" style="left:281px;top:435px;background:#f0f0f0;padding:0 1px;letter-spacing:-.4px">Riduzioni</span><span class="d" style="left:284px;top:454.5px;color:#222">(D1)</span><div style="left:315px;top:451.5px;width:75px;height:20px;background:#e1e1e1;border:1px solid #adadad"></div><span class="d" style="left:319px;top:454.5px;letter-spacing:-.25px">Fine</span><svg style="left:375px;top:459.0px;" width="10" height="6" viewBox="0 0 10 6"><path d="M1 1 L5 5 L9 1" stroke="#333" stroke-width="1.100" fill="none"/></svg><div style="left:396px;top:452.0px;width:59px;height:20px;background:#fff;border:1px solid #7a7a7a"></div><span class="d" style="left:400px;top:455.0px;color:#000">2</span><span class="d" style="left:284px;top:477.5px;color:#222">(D2)</span><div style="left:315px;top:474.5px;width:75px;height:20px;background:#e1e1e1;border:1px solid #adadad"></div><span class="d" style="left:319px;top:477.5px;letter-spacing:-.25px">Fine</span><svg style="left:375px;top:482.0px;" width="10" height="6" viewBox="0 0 10 6"><path d="M1 1 L5 5 L9 1" stroke="#333" stroke-width="1.100" fill="none"/></svg><div style="left:396px;top:475.0px;width:59px;height:20px;background:#fff;border:1px solid #7a7a7a"></div><span class="d" style="left:400px;top:478.0px;color:#000">152</span><span class="d" style="left:284px;top:500.5px;color:#222">(D3)</span><div style="left:315px;top:497.5px;width:75px;height:20px;background:#e1e1e1;border:1px solid #adadad"></div><span class="d" style="left:319px;top:500.5px;letter-spacing:-.25px">Fine</span><svg style="left:375px;top:505.0px;" width="10" height="6" viewBox="0 0 10 6"><path d="M1 1 L5 5 L9 1" stroke="#333" stroke-width="1.100" fill="none"/></svg><div style="left:396px;top:498.0px;width:59px;height:20px;background:#fff;border:1px solid #7a7a7a"></div><span class="d" style="left:400px;top:501.0px;color:#000">2</span><span class="d" style="left:284px;top:523.5px;color:#222">(D4)</span><div style="left:315px;top:520.5px;width:75px;height:20px;background:#e1e1e1;border:1px solid #adadad"></div><span class="d" style="left:319px;top:523.5px;letter-spacing:-.25px">Medio</span><svg style="left:375px;top:528.0px;" width="10" height="6" viewBox="0 0 10 6"><path d="M1 1 L5 5 L9 1" stroke="#333" stroke-width="1.100" fill="none"/></svg><div style="left:396px;top:521.0px;width:59px;height:20px;background:#fff;border:1px solid #7a7a7a"></div><span class="d" style="left:400px;top:524.0px;color:#000">1</span><div style="left:5px;top:344px;width:259px;height:182px;background:#f0f0f0;border:1px solid #fff;border-right:2px solid #696969;border-bottom:2px solid #696969"></div><div style="left:5px;top:321px;width:259px;height:23px;background:#f0f0f0;border-top:1px solid #fff;border-right:2px solid #696969"></div><div style="left:5px;top:321px;width:110px;height:24px;background:#fff"></div><span class="d" style="left:14px;top:326px;">Proprietà Materiale</span><span class="d" style="left:10px;top:350px;">Config.</span><div style="left:70px;top:348px;width:161px;height:19px;background:#ebebeb;border:1px solid #bcbcbc"></div><div style="left:212px;top:350px;width:17px;height:15px;background:#e1e1e1;border:1px solid #adadad"></div><svg style="left:216px;top:355px;" width="10" height="6" viewBox="0 0 10 6"><path d="M1 1 L5 5 L9 1" stroke="#333" stroke-width="1.100" fill="none"/></svg><svg style="left:239px;top:351px;" width="17" height="16" viewBox="0 0 17 16"><path d="M4 1 H14 C16 1 16 4 14 4 H13 V12 H3 C1 12 1 9 3 9 H4Z" fill="#d8d8d8" stroke="#999" stroke-width=".9"/><circle cx="12" cy="11" r="4" fill="#aaa"/><rect x="11.300" y="10" width="1.400" height="3.500" fill="#fff"/><circle cx="12" cy="8.700" r=".8" fill="#fff"/></svg><span class="d" style="left:12.5px;top:376px;letter-spacing:.1px">Gruppo</span><div style="left:70px;top:372.5px;width:188px;height:20px;background:#e1e1e1;border:1px solid #adadad"></div><span class="d" style="left:74px;top:375.5px;letter-spacing:-.25px">Standard</span><svg style="left:243px;top:380.0px;" width="10" height="6" viewBox="0 0 10 6"><path d="M1 1 L5 5 L9 1" stroke="#333" stroke-width="1.100" fill="none"/></svg><span class="d" style="left:10px;top:398px;letter-spacing:.1px">Materiale</span><div style="left:70px;top:395.5px;width:188px;height:20px;background:#e1e1e1;border:1px solid #adadad"></div><span class="d" style="left:74px;top:398.5px;letter-spacing:-.25px">Massello</span><svg style="left:243px;top:403.0px;" width="10" height="6" viewBox="0 0 10 6"><path d="M1 1 L5 5 L9 1" stroke="#333" stroke-width="1.100" fill="none"/></svg><span class="d" style="left:10px;top:421px;">Tipo</span><div style="left:70px;top:418.5px;width:188px;height:20px;background:#e1e1e1;border:1px solid #adadad"></div><span class="d" style="left:74px;top:421.5px;letter-spacing:-.25px">Ciliegio</span><svg style="left:243px;top:426.0px;" width="10" height="6" viewBox="0 0 10 6"><path d="M1 1 L5 5 L9 1" stroke="#333" stroke-width="1.100" fill="none"/></svg><span class="d" style="left:10px;top:446px;letter-spacing:.1px">Senso Vena</span><div style="left:133px;top:443.5px;width:125px;height:20px;background:#e1e1e1;border:1px solid #adadad"></div><span class="d" style="left:137px;top:446.5px;letter-spacing:-.25px">Non Definito</span><svg style="left:243px;top:451.0px;" width="10" height="6" viewBox="0 0 10 6"><path d="M1 1 L5 5 L9 1" stroke="#333" stroke-width="1.100" fill="none"/></svg><span class="d" style="left:10px;top:477px;letter-spacing:.1px">Spessore</span><div style="left:70px;top:474px;width:68px;height:21px;background:#fff;border:1px solid #7a7a7a"></div><span class="d" style="left:74px;top:477.5px;letter-spacing:-.25px">18</span><svg style="left:123px;top:482.0px;" width="10" height="6" viewBox="0 0 10 6"><path d="M1 1 L5 5 L9 1" stroke="#333" stroke-width="1.100" fill="none"/></svg><span class="d" style="left:154px;top:476px;letter-spacing:.15px">Applica Textures</span><div style="left:243px;top:478px;width:13px;height:13px;background:#fff;border:1px solid #333"></div><div style="left:5px;top:526px;width:46px;height:22px;background:#fff"></div><span class="d" style="left:10px;top:532px;">Antine</span></div>
</body></html>
